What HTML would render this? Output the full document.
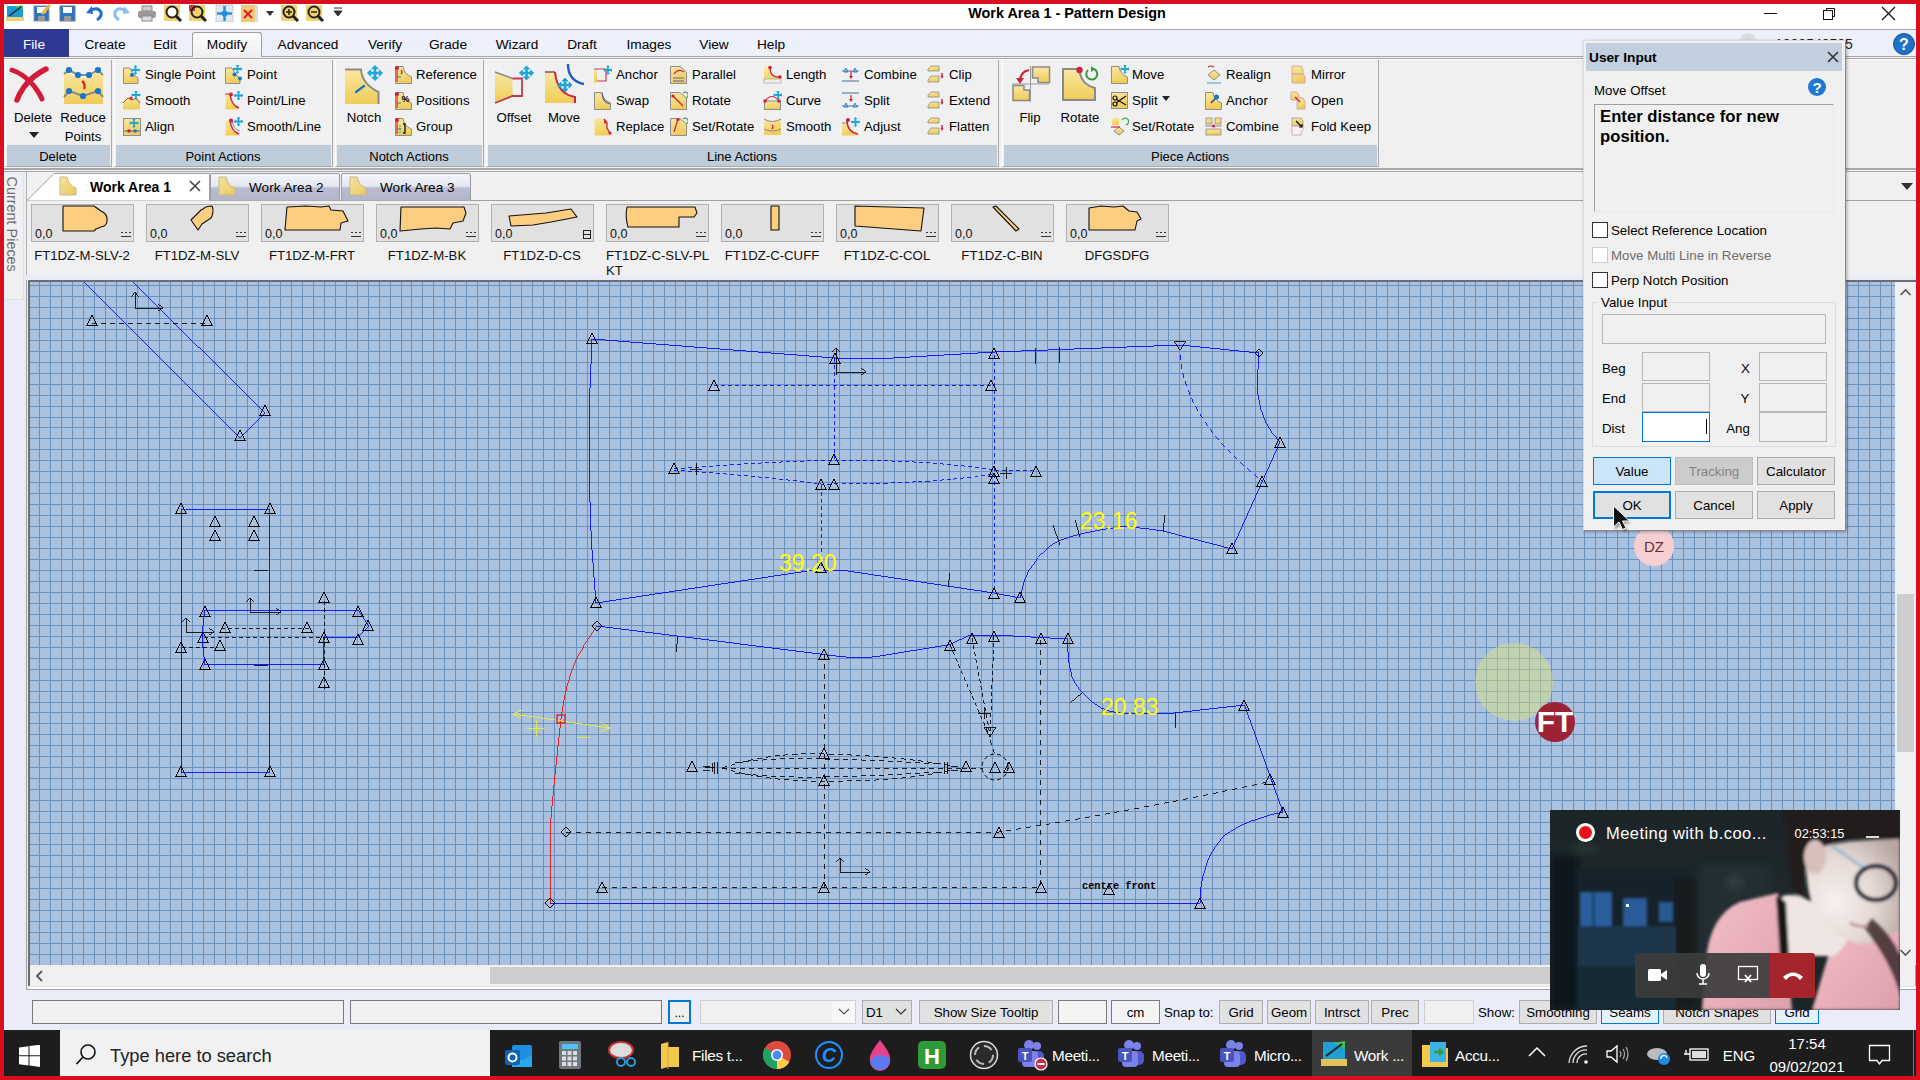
<!DOCTYPE html><html><head><meta charset='utf-8'><style>
*{box-sizing:border-box;margin:0;padding:0}
body{width:1920px;height:1080px;overflow:hidden;background:#d80f1f;font-family:"Liberation Sans",sans-serif;position:relative;color:#000}
.a{position:absolute}
.t{position:absolute;white-space:nowrap;line-height:1}
</style></head><body><div class='a' style='left:4px;top:4px;width:1912px;height:1026px;background:#eaedf9'></div><div class='a' style='left:4px;top:4px;width:1912px;height:25px;background:#fff'></div><svg class='a' style='left:5px;top:4px;' width='20' height='18' viewBox='0 0 20 18'><rect x='2' y='2' width='16' height='11' fill='#1a9bd7'/><path d='M9 3 L17 1 L18 6 Z' fill='#3fbf55'/><path d='M4 12 L16 3' stroke='#222' stroke-width='1.5'/><rect x='1' y='13' width='18' height='4' fill='#f0d27a'/></svg><svg class='a' style='left:32px;top:4px;' width='20' height='18' viewBox='0 0 20 18'><rect x='2' y='2' width='15' height='15' fill='#2676c4' stroke='#8a97a8'/><rect x='5' y='3' width='9' height='6' fill='#fff'/><rect x='6' y='12' width='7' height='5' fill='#999'/><path d='M10 10 L18 1' stroke='#f0b640' stroke-width='3'/></svg><svg class='a' style='left:58px;top:4px;' width='20' height='18' viewBox='0 0 20 18'><rect x='2' y='2' width='15' height='15' fill='#2676c4' stroke='#6f7d90'/><rect x='5' y='3' width='9' height='6' fill='#fff'/><rect x='6' y='12' width='7' height='5' fill='#999'/></svg><svg class='a' style='left:85px;top:4px;' width='20' height='18' viewBox='0 0 20 18'><path d='M5 7 Q12 2 16 8 Q17 13 12 16' stroke='#1d6fd0' stroke-width='3' fill='none'/><path d='M1 9 L7 2 L8 10 Z' fill='#1d6fd0'/></svg><svg class='a' style='left:111px;top:4px;' width='20' height='18' viewBox='0 0 20 18'><path d='M15 7 Q8 2 4 8 Q3 13 8 16' stroke='#88bbee' stroke-width='3' fill='none'/><path d='M19 9 L13 2 L12 10 Z' fill='#88bbee'/></svg><svg class='a' style='left:137px;top:4px;' width='20' height='18' viewBox='0 0 20 18'><rect x='5' y='2' width='10' height='5' fill='#ccc' stroke='#888'/><rect x='1' y='7' width='18' height='7' rx='2' fill='#9a9a9a'/><rect x='5' y='12' width='10' height='5' fill='#ddd' stroke='#888'/></svg><svg class='a' style='left:163px;top:4px;' width='20' height='18' viewBox='0 0 20 18'><rect x='1' y='1' width='16' height='16' fill='#f3d36b'/><circle cx='9' cy='8' r='5.5' fill='#fff' stroke='#222' stroke-width='2'/><path d='M13 12 L18 17' stroke='#222' stroke-width='3'/></svg><svg class='a' style='left:188px;top:4px;' width='20' height='18' viewBox='0 0 20 18'><rect x='1' y='1' width='16' height='16' fill='#f3d36b'/><rect x='1' y='1' width='6' height='6' fill='#d33'/><circle cx='9' cy='8' r='5.5' fill='none' stroke='#222' stroke-width='2'/><path d='M13 12 L18 17' stroke='#222' stroke-width='3'/></svg><svg class='a' style='left:215px;top:4px;' width='20' height='18' viewBox='0 0 20 18'><rect x='1' y='1' width='17' height='17' fill='#dfe8f3' stroke='#bbb' stroke-dasharray='2 1'/><path d='M9.5 2 V17 M2 9.5 H17' stroke='#2a8fd8' stroke-width='2.5'/><circle cx='9.5' cy='9.5' r='3' fill='#2a8fd8'/></svg><svg class='a' style='left:239px;top:4px;' width='20' height='18' viewBox='0 0 20 18'><rect x='2' y='1' width='14' height='17' fill='#f0c878'/><path d='M5 6 L13 14 M13 6 L5 14' stroke='#d22' stroke-width='2'/><rect x='16' y='1' width='3' height='17' fill='#ddd'/></svg><svg class='a' style='left:280px;top:4px;' width='20' height='18' viewBox='0 0 20 18'><rect x='1' y='1' width='16' height='16' fill='#f3d36b'/><circle cx='9' cy='8' r='5.5' fill='none' stroke='#222' stroke-width='2'/><path d='M6 8 H12 M9 5 V11' stroke='#222' stroke-width='1.5'/><path d='M13 12 L18 17' stroke='#222' stroke-width='3'/></svg><svg class='a' style='left:305px;top:4px;' width='20' height='18' viewBox='0 0 20 18'><rect x='1' y='1' width='16' height='16' fill='#f3d36b'/><circle cx='9' cy='8' r='5.5' fill='none' stroke='#222' stroke-width='2'/><path d='M6 8 H12' stroke='#222' stroke-width='1.5'/><path d='M13 12 L18 17' stroke='#222' stroke-width='3'/></svg><svg class='a' style='left:265px;top:9px;' width='10' height='8' viewBox='0 0 10 8'><path d='M1 2 H9 L5 7 Z' fill='#333'/></svg><svg class='a' style='left:333px;top:7px;' width='10' height='12' viewBox='0 0 10 12'><path d='M1 1 H9 M1 4 H9 L5 9 Z' stroke='#333' fill='#333'/></svg><div class='t' style='left:937.0px;top:5.8px;width:260px;text-align:center;font-size:14.4px;font-weight:700;color:#000;'>Work Area 1 - Pattern Design</div><div class='a' style='left:1764px;top:13px;width:13px;height:1px;background:#111'></div><svg class='a' style='left:1822px;top:7px;' width='14' height='14' viewBox='0 0 14 14'><rect x='1.5' y='3.5' width='9' height='9' fill='none' stroke='#111'/><path d='M4.5 3.5 V1.5 H12.5 V9.5 H10.5' fill='none' stroke='#111'/></svg><svg class='a' style='left:1881px;top:6px;' width='15' height='15' viewBox='0 0 15 15'><path d='M1 1 L14 14 M14 1 L1 14' stroke='#111' stroke-width='1.2'/></svg><div class='a' style='left:4px;top:29px;width:1912px;height:28px;background:#edf0fb;border-top:1px solid #a6a6a6;border-bottom:1px solid #a6a6a6'></div><div class='a' style='left:4px;top:29px;width:65px;height:29px;background:#2e3a92'></div><div class='a' style='left:192px;top:32px;width:70px;height:26px;background:linear-gradient(#fdfdfe,#efefef);border:1px solid #a0a0a0;border-bottom:none;border-radius:3px 3px 0 0'></div><div class='t' style='left:4.0px;top:38.4px;width:60px;text-align:center;font-size:13.7px;font-weight:400;color:#fff;'>File</div><div class='t' style='left:65.0px;top:38.4px;width:80px;text-align:center;font-size:13.7px;font-weight:400;color:#000;'>Create</div><div class='t' style='left:125.0px;top:38.4px;width:80px;text-align:center;font-size:13.7px;font-weight:400;color:#000;'>Edit</div><div class='t' style='left:187.0px;top:38.4px;width:80px;text-align:center;font-size:13.7px;font-weight:400;color:#000;'>Modify</div><div class='t' style='left:268.0px;top:38.4px;width:80px;text-align:center;font-size:13.7px;font-weight:400;color:#000;'>Advanced</div><div class='t' style='left:345.0px;top:38.4px;width:80px;text-align:center;font-size:13.7px;font-weight:400;color:#000;'>Verify</div><div class='t' style='left:408.0px;top:38.4px;width:80px;text-align:center;font-size:13.7px;font-weight:400;color:#000;'>Grade</div><div class='t' style='left:477.0px;top:38.4px;width:80px;text-align:center;font-size:13.7px;font-weight:400;color:#000;'>Wizard</div><div class='t' style='left:542.0px;top:38.4px;width:80px;text-align:center;font-size:13.7px;font-weight:400;color:#000;'>Draft</div><div class='t' style='left:609.0px;top:38.4px;width:80px;text-align:center;font-size:13.7px;font-weight:400;color:#000;'>Images</div><div class='t' style='left:674.0px;top:38.4px;width:80px;text-align:center;font-size:13.7px;font-weight:400;color:#000;'>View</div><div class='t' style='left:731.0px;top:38.4px;width:80px;text-align:center;font-size:13.7px;font-weight:400;color:#000;'>Help</div><div class='t' style='left:1775.0px;top:36.6px;font-size:14px;font-weight:400;color:#222;'>1000540505</div><div class='a' style='left:1740px;top:33px;width:16px;height:16px;border-radius:50%;background:#dcdde3'></div><svg class='a' style='left:1892px;top:32px;' width='24' height='24' viewBox='0 0 24 24'><circle cx='12' cy='12' r='10.5' fill='#1e73c8'/><circle cx='12' cy='12' r='10.5' fill='none' stroke='#0d4f99'/><text x='12' y='17.5' font-size='16' font-weight='700' text-anchor='middle' fill='#fff' font-family='Liberation Sans'>?</text></svg><div class='a' style='left:4px;top:57px;width:1912px;height:111px;background:#f0f0f0'></div><div class='a' style='left:4px;top:58px;width:1912px;height:1px;background:#a6a6a6'></div><div class='a' style='left:4px;top:59px;width:1912px;height:1px;background:#fff'></div><div class='a' style='left:5px;top:60px;width:107px;height:107px;border:1px solid #a9a9a9;border-top:none;border-left-color:#fff;background:#f0f0f0'></div><div class='a' style='left:7px;top:145px;width:103px;height:21px;background:#bfccda;border-top:1px solid #bac8d8'></div><div class='t' style='left:-92.0px;top:149.5px;width:300px;text-align:center;font-size:13.0px;font-weight:400;color:#000;'>Delete</div><div class='a' style='left:114px;top:60px;width:219px;height:107px;border:1px solid #a9a9a9;border-top:none;border-left-color:#fff;background:#f0f0f0'></div><div class='a' style='left:116px;top:145px;width:215px;height:21px;background:#bfccda;border-top:1px solid #bac8d8'></div><div class='t' style='left:73.0px;top:149.5px;width:300px;text-align:center;font-size:13.0px;font-weight:400;color:#000;'>Point Actions</div><div class='a' style='left:335px;top:60px;width:149px;height:107px;border:1px solid #a9a9a9;border-top:none;border-left-color:#fff;background:#f0f0f0'></div><div class='a' style='left:337px;top:145px;width:145px;height:21px;background:#bfccda;border-top:1px solid #bac8d8'></div><div class='t' style='left:259.0px;top:149.5px;width:300px;text-align:center;font-size:13.0px;font-weight:400;color:#000;'>Notch Actions</div><div class='a' style='left:486px;top:60px;width:513px;height:107px;border:1px solid #a9a9a9;border-top:none;border-left-color:#fff;background:#f0f0f0'></div><div class='a' style='left:488px;top:145px;width:509px;height:21px;background:#bfccda;border-top:1px solid #bac8d8'></div><div class='t' style='left:592.0px;top:149.5px;width:300px;text-align:center;font-size:13.0px;font-weight:400;color:#000;'>Line Actions</div><div class='a' style='left:1002px;top:60px;width:377px;height:107px;border:1px solid #a9a9a9;border-top:none;border-left-color:#fff;background:#f0f0f0'></div><div class='a' style='left:1004px;top:145px;width:373px;height:21px;background:#bfccda;border-top:1px solid #bac8d8'></div><div class='t' style='left:1040.0px;top:149.5px;width:300px;text-align:center;font-size:13.0px;font-weight:400;color:#000;'>Piece Actions</div><div class='a' style='left:4px;top:168px;width:1912px;height:2px;background:#a8a8a8'></div><div class='a' style='left:4px;top:170px;width:1912px;height:1px;background:#eef0fa'></div><div class='a' style='left:4px;top:171px;width:1912px;height:1px;background:#a8a8a8'></div><svg class='a' style='left:14px;top:64px;overflow:visible' width='40' height='42' viewBox='0 0 40 42'><defs><linearGradient id='yb' x1='0' y1='0' x2='0' y2='1'><stop offset='0' stop-color='#f9e7a2'/><stop offset='1' stop-color='#f0cc58'/></linearGradient></defs><path d='M-2 6 Q10 10 20 22 Q26 30 28 35' stroke='#d21a3a' stroke-width='5' fill='none' stroke-linecap='round'/><path d='M32 5 Q18 12 10 23 Q5 30 3 36' stroke='#d21a3a' stroke-width='5.5' fill='none' stroke-linecap='round'/></svg><div class='t' style='left:-7.0px;top:110.8px;width:80px;text-align:center;font-size:13.2px;font-weight:400;color:#000;'>Delete</div><svg class='a' style='left:28px;top:131px;' width='12' height='8' viewBox='0 0 12 8'><path d='M1 1 H11 L6 7 Z' fill='#222'/></svg><svg class='a' style='left:64px;top:64px;overflow:visible' width='40' height='42' viewBox='0 0 40 42'><defs><linearGradient id='yb' x1='0' y1='0' x2='0' y2='1'><stop offset='0' stop-color='#f9e7a2'/><stop offset='1' stop-color='#f0cc58'/></linearGradient></defs><path d='M0 7 L5 10 L14 14 L25 14 L34 7 L39 10 V40 H0 Z' fill='url(#yb)'/><path d='M0 10 L5 6 L14 11 L25 11 L34 6 L39 11 M0 33 L5 27 L19 32 L34 27 L39 33' stroke='#8a8a8a' stroke-width='2' fill='none'/><circle cx='5' cy='6' r='3.1' fill='#1a78c2'/><circle cx='14' cy='11' r='3.1' fill='#1a78c2'/><circle cx='25' cy='11' r='3.1' fill='#1a78c2'/><circle cx='34' cy='6' r='3.1' fill='#1a78c2'/><circle cx='5' cy='27' r='3.1' fill='#1a78c2'/><circle cx='19' cy='32' r='3.1' fill='#1a78c2'/><circle cx='34' cy='27' r='3.1' fill='#1a78c2'/><path d='M18 17 Q22 20 20 25' stroke='#d22' stroke-width='2.2' fill='none'/></svg><div class='t' style='left:43.0px;top:110.8px;width:80px;text-align:center;font-size:13.2px;font-weight:400;color:#000;'>Reduce</div><div class='t' style='left:43.0px;top:129.8px;width:80px;text-align:center;font-size:13.2px;font-weight:400;color:#000;'>Points</div><svg class='a' style='left:122px;top:65px;' width='19' height='19' viewBox='0 0 19 19'><defs><linearGradient id='yg' x1='0' y1='0' x2='0.3' y2='1'><stop offset='0' stop-color='#fae7a4'/><stop offset='1' stop-color='#f0cd5a'/></linearGradient></defs><path d='M1.5 3 H8 L12 10 L16 13 V18.5 H1.5 Z' fill='url(#yg)' stroke='#8d8d8d'/><circle cx='10' cy='10' r='2' fill='#1a78c2'/><path d='M13.5 1 V9 M9.5 5 H17.5' stroke='#1ca6dc' stroke-width='1.8'/><path d='M11.7 2 L13.5 0 L15.3 2 Z M11.7 8 L13.5 10 L15.3 8 Z M10.5 3.2 L8.5 5 L10.5 6.8 Z M16.5 3.2 L18.5 5 L16.5 6.8 Z' fill='#1ca6dc'/></svg><div class='t' style='left:145.0px;top:67.8px;font-size:13.2px;font-weight:400;color:#000;'>Single Point</div><svg class='a' style='left:122px;top:91px;' width='19' height='19' viewBox='0 0 19 19'><defs><linearGradient id='yg' x1='0' y1='0' x2='0.3' y2='1'><stop offset='0' stop-color='#fae7a4'/><stop offset='1' stop-color='#f0cd5a'/></linearGradient></defs><path d='M1 10 L6 6 L10 8 L14 6 L18 11 V18.5 H1 Z' fill='url(#yg)'/><path d='M1 12 L6 7 L10 9 L14 7 L18 12' stroke='#c43' stroke-width='1' fill='none'/><circle cx='9' cy='7' r='1.5' fill='#d0213a'/><path d='M14 0 V8 M10 4 H18' stroke='#1ca6dc' stroke-width='1.8'/><path d='M12.2 1 L14 -1 L15.8 1 Z M12.2 7 L14 9 L15.8 7 Z M11 2.2 L9 4 L11 5.8 Z M17 2.2 L19 4 L17 5.8 Z' fill='#1ca6dc'/></svg><div class='t' style='left:145.0px;top:93.8px;font-size:13.2px;font-weight:400;color:#000;'>Smooth</div><svg class='a' style='left:122px;top:117px;' width='19' height='19' viewBox='0 0 19 19'><defs><linearGradient id='yg' x1='0' y1='0' x2='0.3' y2='1'><stop offset='0' stop-color='#fae7a4'/><stop offset='1' stop-color='#f0cd5a'/></linearGradient></defs><rect x='1.5' y='1.5' width='17' height='17' fill='url(#yg)' stroke='#8d8d8d'/><path d='M2 14 H18' stroke='#1a78c2'/><circle cx='7' cy='14' r='1.8' fill='#d0213a'/><circle cx='13' cy='14' r='1.8' fill='#1a78c2'/><path d='M12 2 V10 M8 6 H16' stroke='#1ca6dc' stroke-width='1.8'/><path d='M10.2 3 L12 1 L13.8 3 Z M10.2 9 L12 11 L13.8 9 Z M9 4.2 L7 6 L9 7.8 Z M15 4.2 L17 6 L15 7.8 Z' fill='#1ca6dc'/></svg><div class='t' style='left:145.0px;top:119.8px;font-size:13.2px;font-weight:400;color:#000;'>Align</div><svg class='a' style='left:224px;top:65px;' width='19' height='19' viewBox='0 0 19 19'><defs><linearGradient id='yg' x1='0' y1='0' x2='0.3' y2='1'><stop offset='0' stop-color='#fae7a4'/><stop offset='1' stop-color='#f0cd5a'/></linearGradient></defs><path d='M1.5 3 H8 L12 10 L16 13 V18.5 H1.5 Z' fill='url(#yg)' stroke='#8d8d8d'/><circle cx='10.5' cy='9.5' r='2' fill='#1a78c2'/><circle cx='16' cy='13.5' r='2' fill='#1a78c2'/><path d='M13.5 0 V8 M9.5 4 H17.5' stroke='#1ca6dc' stroke-width='1.8'/><path d='M11.7 1 L13.5 -1 L15.3 1 Z M11.7 7 L13.5 9 L15.3 7 Z M10.5 2.2 L8.5 4 L10.5 5.8 Z M16.5 2.2 L18.5 4 L16.5 5.8 Z' fill='#1ca6dc'/></svg><div class='t' style='left:247.0px;top:67.8px;font-size:13.2px;font-weight:400;color:#000;'>Point</div><svg class='a' style='left:224px;top:91px;' width='19' height='19' viewBox='0 0 19 19'><defs><linearGradient id='yg' x1='0' y1='0' x2='0.3' y2='1'><stop offset='0' stop-color='#fae7a4'/><stop offset='1' stop-color='#f0cd5a'/></linearGradient></defs><path d='M1.5 3 H6 Q7 14 14 17 V18.5 H1.5 Z' fill='url(#yg)'/><path d='M6 3 Q7 14 15 17' stroke='#d0213a' stroke-width='1.5' fill='none'/><circle cx='7' cy='3.5' r='2' fill='#d0213a'/><path d='M1 3 H6' stroke='#c33'/><path d='M14.5 0.5 V8.5 M10.5 4.5 H18.5' stroke='#1ca6dc' stroke-width='1.8'/><path d='M12.7 1.5 L14.5 -0.5 L16.3 1.5 Z M12.7 7.5 L14.5 9.5 L16.3 7.5 Z M11.5 2.7 L9.5 4.5 L11.5 6.3 Z M17.5 2.7 L19.5 4.5 L17.5 6.3 Z' fill='#1ca6dc'/></svg><div class='t' style='left:247.0px;top:93.8px;font-size:13.2px;font-weight:400;color:#000;'>Point/Line</div><svg class='a' style='left:224px;top:117px;' width='19' height='19' viewBox='0 0 19 19'><defs><linearGradient id='yg' x1='0' y1='0' x2='0.3' y2='1'><stop offset='0' stop-color='#fae7a4'/><stop offset='1' stop-color='#f0cd5a'/></linearGradient></defs><path d='M1.5 3 H6 Q7 14 14 17 V18.5 H1.5 Z' fill='url(#yg)'/><path d='M6 3 Q7 14 15 17' stroke='#d0213a' stroke-width='1.5' fill='none'/><path d='M8 3 Q9 12 16 14' stroke='#888' fill='none'/><circle cx='7' cy='3.5' r='2' fill='#d0213a'/><path d='M14.5 0.5 V8.5 M10.5 4.5 H18.5' stroke='#1ca6dc' stroke-width='1.8'/><path d='M12.7 1.5 L14.5 -0.5 L16.3 1.5 Z M12.7 7.5 L14.5 9.5 L16.3 7.5 Z M11.5 2.7 L9.5 4.5 L11.5 6.3 Z M17.5 2.7 L19.5 4.5 L17.5 6.3 Z' fill='#1ca6dc'/></svg><div class='t' style='left:247.0px;top:119.8px;font-size:13.2px;font-weight:400;color:#000;'>Smooth/Line</div><svg class='a' style='left:345px;top:64px;overflow:visible' width='40' height='42' viewBox='0 0 40 42'><defs><linearGradient id='yb' x1='0' y1='0' x2='0' y2='1'><stop offset='0' stop-color='#f9e7a2'/><stop offset='1' stop-color='#f0cc58'/></linearGradient></defs><path d='M0 5 H16 Q17 20 34 28 V40 H0 Z' fill='url(#yb)'/><path d='M0 5.5 H16 Q17 20 33.5 28 V40' stroke='#8a8a8a' stroke-width='2' fill='none'/><path d='M11 28 L19 22' stroke='#1a78c2' stroke-width='2.4' stroke-linecap='round'/><path d='M30 3.5 V14.5 M24.5 9 H35.5' stroke='#1ca6dc' stroke-width='2.6'/><path d='M26.85 4.65 L30 1.5 L33.15 4.65 Z M26.85 13.35 L30 16.5 L33.15 13.35 Z M25.65 5.85 L22.5 9 L25.65 12.15 Z M34.35 5.85 L37.5 9 L34.35 12.15 Z' fill='#1ca6dc' stroke='#1ca6dc' stroke-width='1'/></svg><div class='t' style='left:324.0px;top:110.8px;width:80px;text-align:center;font-size:13.2px;font-weight:400;color:#000;'>Notch</div><svg class='a' style='left:394px;top:65px;' width='19' height='19' viewBox='0 0 19 19'><defs><linearGradient id='yg' x1='0' y1='0' x2='0.3' y2='1'><stop offset='0' stop-color='#fae7a4'/><stop offset='1' stop-color='#f0cd5a'/></linearGradient></defs><path d='M1.5 1.5 H9 Q10 9 17.5 12 V18.5 H1.5 Z' fill='url(#yg)' stroke='#8d8d8d'/><path d='M3 3 V17' stroke='#d0213a' stroke-width='1.2'/><circle cx='3' cy='3' r='2' fill='#d0213a'/><path d='M3 12 H7' stroke='#2a9ab0' stroke-width='1.2'/><path d='M7 5 Q9 7 7 9' stroke='#d22' stroke-width='1.2' fill='none'/></svg><div class='t' style='left:416.0px;top:67.8px;font-size:13.2px;font-weight:400;color:#000;'>Reference</div><svg class='a' style='left:394px;top:91px;' width='19' height='19' viewBox='0 0 19 19'><defs><linearGradient id='yg' x1='0' y1='0' x2='0.3' y2='1'><stop offset='0' stop-color='#fae7a4'/><stop offset='1' stop-color='#f0cd5a'/></linearGradient></defs><path d='M1.5 1.5 H9 Q10 9 17.5 12 V18.5 H1.5 Z' fill='url(#yg)' stroke='#8d8d8d'/><path d='M3 3 V17' stroke='#d0213a' stroke-width='1.2'/><circle cx='3' cy='3' r='2' fill='#d0213a'/><path d='M3 12 H7' stroke='#2a9ab0' stroke-width='1.2'/><text x='11.5' y='11' font-size='9' font-weight='700' text-anchor='middle' font-family='Liberation Sans'>%</text></svg><div class='t' style='left:416.0px;top:93.8px;font-size:13.2px;font-weight:400;color:#000;'>Positions</div><svg class='a' style='left:394px;top:117px;' width='19' height='19' viewBox='0 0 19 19'><defs><linearGradient id='yg' x1='0' y1='0' x2='0.3' y2='1'><stop offset='0' stop-color='#fae7a4'/><stop offset='1' stop-color='#f0cd5a'/></linearGradient></defs><path d='M1.5 1.5 H9 Q10 9 17.5 12 V18.5 H1.5 Z' fill='url(#yg)' stroke='#8d8d8d'/><path d='M3 3 V17' stroke='#d0213a' stroke-width='1.2'/><circle cx='3' cy='3' r='2' fill='#d0213a'/><path d='M3 12 H7' stroke='#2a9ab0' stroke-width='1.2'/><path d='M5 9 H7 M5 12 H7 M5 15 H7' stroke='#2a9ab0'/><path d='M9 7 H11 V16 H9' stroke='#111' stroke-width='1.3' fill='none'/></svg><div class='t' style='left:416.0px;top:119.8px;font-size:13.2px;font-weight:400;color:#000;'>Group</div><svg class='a' style='left:495px;top:64px;overflow:visible' width='40' height='42' viewBox='0 0 40 42'><defs><linearGradient id='yb' x1='0' y1='0' x2='0' y2='1'><stop offset='0' stop-color='#f9e7a2'/><stop offset='1' stop-color='#f0cc58'/></linearGradient></defs><path d='M0 8 L17.5 14.5 V32 L0 39 Z' fill='url(#yb)'/><path d='M0 8 L17.5 14.5' stroke='#888' stroke-width='1.5'/><path d='M17.5 14.5 H27 V32 H17.5 L0 39' stroke='#c9384e' stroke-width='1.8' fill='none'/><path d='M31.5 4 V14 M26.5 9 H36.5' stroke='#1ca6dc' stroke-width='2.6'/><path d='M28.56 4.9399999999999995 L31.5 2 L34.44 4.9399999999999995 Z M28.56 13.06 L31.5 16 L34.44 13.06 Z M27.44 6.0600000000000005 L24.5 9 L27.44 11.94 Z M35.56 6.0600000000000005 L38.5 9 L35.56 11.94 Z' fill='#1ca6dc' stroke='#1ca6dc' stroke-width='1'/></svg><div class='t' style='left:474.0px;top:110.8px;width:80px;text-align:center;font-size:13.2px;font-weight:400;color:#000;'>Offset</div><svg class='a' style='left:545px;top:64px;overflow:visible' width='40' height='42' viewBox='0 0 40 42'><defs><linearGradient id='yb' x1='0' y1='0' x2='0' y2='1'><stop offset='0' stop-color='#f9e7a2'/><stop offset='1' stop-color='#f0cc58'/></linearGradient></defs><path d='M0 8 H10 Q12 30 30 33 V39 H0 Z' fill='url(#yb)'/><path d='M0 8 H10' stroke='#9a7a7a' stroke-width='2'/><path d='M10 8 Q12 30 30 33 V39' stroke='#d0213a' stroke-width='2' fill='none'/><path d='M23 0 Q23 17 39 20' stroke='#1f5fc0' stroke-width='2.4' fill='none'/><path d='M20 16 V26 M15 21 H25' stroke='#1ca6dc' stroke-width='2.6'/><path d='M17.06 16.94 L20 14 L22.94 16.94 Z M17.06 25.06 L20 28 L22.94 25.06 Z M15.94 18.06 L13 21 L15.94 23.94 Z M24.06 18.06 L27 21 L24.06 23.94 Z' fill='#1ca6dc' stroke='#1ca6dc' stroke-width='1'/></svg><div class='t' style='left:524.0px;top:110.8px;width:80px;text-align:center;font-size:13.2px;font-weight:400;color:#000;'>Move</div><svg class='a' style='left:593px;top:65px;' width='19' height='19' viewBox='0 0 19 19'><defs><linearGradient id='yg' x1='0' y1='0' x2='0.3' y2='1'><stop offset='0' stop-color='#fae7a4'/><stop offset='1' stop-color='#f0cd5a'/></linearGradient></defs><path d='M1 6 L4 4 V17 L1 18 Z' fill='url(#yg)'/><path d='M4 4 H13 V16 H4' stroke='#c9384e' stroke-width='1.2' fill='none'/><path d='M1 4 L4 4' stroke='#c9384e'/><path d='M15 1 V9 M11 5 H19' stroke='#1ca6dc' stroke-width='1.8'/><path d='M13.2 2 L15 0 L16.8 2 Z M13.2 8 L15 10 L16.8 8 Z M12 3.2 L10 5 L12 6.8 Z M18 3.2 L20 5 L18 6.8 Z' fill='#1ca6dc'/></svg><div class='t' style='left:616.0px;top:67.8px;font-size:13.2px;font-weight:400;color:#000;'>Anchor</div><svg class='a' style='left:593px;top:91px;' width='19' height='19' viewBox='0 0 19 19'><defs><linearGradient id='yg' x1='0' y1='0' x2='0.3' y2='1'><stop offset='0' stop-color='#fae7a4'/><stop offset='1' stop-color='#f0cd5a'/></linearGradient></defs><path d='M1.5 1.5 H9 Q10 9 17.5 12 V18.5 H1.5 Z' fill='url(#yg)' stroke='#8d8d8d'/><path d='M9 2 Q10 12 17 13' stroke='#4a5cb0' stroke-width='1.2' fill='none'/></svg><div class='t' style='left:616.0px;top:93.8px;font-size:13.2px;font-weight:400;color:#000;'>Swap</div><svg class='a' style='left:593px;top:117px;' width='19' height='19' viewBox='0 0 19 19'><defs><linearGradient id='yg' x1='0' y1='0' x2='0.3' y2='1'><stop offset='0' stop-color='#fae7a4'/><stop offset='1' stop-color='#f0cd5a'/></linearGradient></defs><path d='M1.5 1.5 H11 L14 6 V12 L17 15 V18.5 H1.5 Z' fill='url(#yg)'/><path d='M11 2 L14 6 V11 L17 16' stroke='#d0213a' stroke-width='1.3' fill='none'/><circle cx='12.5' cy='5' r='1.6' fill='#d0213a'/><circle cx='17' cy='16' r='1.6' fill='#d0213a'/></svg><div class='t' style='left:616.0px;top:119.8px;font-size:13.2px;font-weight:400;color:#000;'>Replace</div><svg class='a' style='left:669px;top:65px;' width='19' height='19' viewBox='0 0 19 19'><defs><linearGradient id='yg' x1='0' y1='0' x2='0.3' y2='1'><stop offset='0' stop-color='#fae7a4'/><stop offset='1' stop-color='#f0cd5a'/></linearGradient></defs><path d='M1.5 1.5 H11 L17.5 7 V18.5 H1.5 Z' fill='url(#yg)' stroke='#8d8d8d'/><path d='M5 9 Q9 3 15 7' stroke='#d0213a' stroke-width='1.2' fill='none'/><path d='M4 13 H15 M4 16 H15' stroke='#5563a8' stroke-width='1.2'/></svg><div class='t' style='left:692.0px;top:67.8px;font-size:13.2px;font-weight:400;color:#000;'>Parallel</div><svg class='a' style='left:669px;top:91px;' width='19' height='19' viewBox='0 0 19 19'><defs><linearGradient id='yg' x1='0' y1='0' x2='0.3' y2='1'><stop offset='0' stop-color='#fae7a4'/><stop offset='1' stop-color='#f0cd5a'/></linearGradient></defs><path d='M1.5 1.5 H11 L17.5 7 V18.5 H1.5 Z' fill='url(#yg)' stroke='#8d8d8d'/><path d='M4 5 L14 15' stroke='#d0213a' stroke-width='1.2'/><circle cx='4' cy='5' r='1.6' fill='#d0213a'/><path d='M14 2 A3 3 0 1 1 17 7' stroke='#4a4' stroke-width='1.2' fill='none'/></svg><div class='t' style='left:692.0px;top:93.8px;font-size:13.2px;font-weight:400;color:#000;'>Rotate</div><svg class='a' style='left:669px;top:117px;' width='19' height='19' viewBox='0 0 19 19'><defs><linearGradient id='yg' x1='0' y1='0' x2='0.3' y2='1'><stop offset='0' stop-color='#fae7a4'/><stop offset='1' stop-color='#f0cd5a'/></linearGradient></defs><path d='M1.5 1.5 H11 L17.5 7 V18.5 H1.5 Z' fill='url(#yg)' stroke='#8d8d8d'/><path d='M9 2 L5 15' stroke='#d0213a' stroke-width='1.2'/><circle cx='9' cy='2.5' r='1.6' fill='#d0213a'/><path d='M14 2 A3 3 0 1 1 17 7' stroke='#4a4' stroke-width='1.2' fill='none'/></svg><div class='t' style='left:692.0px;top:119.8px;font-size:13.2px;font-weight:400;color:#000;'>Set/Rotate</div><svg class='a' style='left:763px;top:65px;' width='19' height='19' viewBox='0 0 19 19'><defs><linearGradient id='yg' x1='0' y1='0' x2='0.3' y2='1'><stop offset='0' stop-color='#fae7a4'/><stop offset='1' stop-color='#f0cd5a'/></linearGradient></defs><path d='M1 2 H6 Q8 12 17 12 V18 H1 Z' fill='url(#yg)'/><path d='M7 2 Q7 13 17 12' stroke='#d0213a' stroke-width='1.3' fill='none'/><circle cx='7' cy='2.5' r='1.8' fill='#d0213a'/><circle cx='17' cy='12' r='1.8' fill='#d0213a'/><rect x='1' y='14' width='17' height='4' fill='#eee' stroke='#999' stroke-width='0.6'/></svg><div class='t' style='left:786.0px;top:67.8px;font-size:13.2px;font-weight:400;color:#000;'>Length</div><svg class='a' style='left:763px;top:91px;' width='19' height='19' viewBox='0 0 19 19'><defs><linearGradient id='yg' x1='0' y1='0' x2='0.3' y2='1'><stop offset='0' stop-color='#fae7a4'/><stop offset='1' stop-color='#f0cd5a'/></linearGradient></defs><rect x='1.5' y='10' width='16' height='8.5' fill='url(#yg)' stroke='#8d8d8d'/><path d='M2 10 Q9 1 16 10' stroke='#d0213a' stroke-width='1.2' fill='none'/><circle cx='2' cy='10' r='1.8' fill='#d0213a'/><circle cx='16' cy='10' r='1.8' fill='#d0213a'/><path d='M15 0 V8 M11 4 H19' stroke='#1ca6dc' stroke-width='1.8'/><path d='M13.2 1 L15 -1 L16.8 1 Z M13.2 7 L15 9 L16.8 7 Z M12 2.2 L10 4 L12 5.8 Z M18 2.2 L20 4 L18 5.8 Z' fill='#1ca6dc'/></svg><div class='t' style='left:786.0px;top:93.8px;font-size:13.2px;font-weight:400;color:#000;'>Curve</div><svg class='a' style='left:763px;top:117px;' width='19' height='19' viewBox='0 0 19 19'><defs><linearGradient id='yg' x1='0' y1='0' x2='0.3' y2='1'><stop offset='0' stop-color='#fae7a4'/><stop offset='1' stop-color='#f0cd5a'/></linearGradient></defs><path d='M1 2 Q9 7 18 2 V18 H1 Z' fill='url(#yg)'/><path d='M1 2 Q9 7 18 2 M1 12 Q9 16 18 12' stroke='#888' fill='none'/><path d='M9 8 Q11 10 9 12' stroke='#d22' stroke-width='1.2' fill='none'/></svg><div class='t' style='left:786.0px;top:119.8px;font-size:13.2px;font-weight:400;color:#000;'>Smooth</div><svg class='a' style='left:841px;top:65px;' width='19' height='19' viewBox='0 0 19 19'><defs><linearGradient id='yg' x1='0' y1='0' x2='0.3' y2='1'><stop offset='0' stop-color='#fae7a4'/><stop offset='1' stop-color='#f0cd5a'/></linearGradient></defs><path d='M1 6 H18' stroke='#3a7abf'/><path d='M5 3 L3 7 H7 Z M14 3 L12 7 H16 Z' fill='none' stroke='#3a7abf'/><path d='M10 6 V12' stroke='#d0213a' stroke-width='1.3'/><path d='M8 11 L10 14 L12 11 Z' fill='#d0213a'/><path d='M1 16 H18' stroke='#6a8aaa' stroke-width='1.3'/></svg><div class='t' style='left:864.0px;top:67.8px;font-size:13.2px;font-weight:400;color:#000;'>Combine</div><svg class='a' style='left:841px;top:91px;' width='19' height='19' viewBox='0 0 19 19'><defs><linearGradient id='yg' x1='0' y1='0' x2='0.3' y2='1'><stop offset='0' stop-color='#fae7a4'/><stop offset='1' stop-color='#f0cd5a'/></linearGradient></defs><path d='M1 2 H18' stroke='#6a8aaa' stroke-width='1.3'/><path d='M10 4 V9' stroke='#d0213a' stroke-width='1.3'/><path d='M8 8 L10 11 L12 8 Z' fill='#d0213a'/><path d='M1 15 H18' stroke='#3a7abf'/><path d='M5 12 L3 16 H7 Z M14 12 L12 16 H16 Z' fill='none' stroke='#3a7abf'/></svg><div class='t' style='left:864.0px;top:93.8px;font-size:13.2px;font-weight:400;color:#000;'>Split</div><svg class='a' style='left:841px;top:117px;' width='19' height='19' viewBox='0 0 19 19'><defs><linearGradient id='yg' x1='0' y1='0' x2='0.3' y2='1'><stop offset='0' stop-color='#fae7a4'/><stop offset='1' stop-color='#f0cd5a'/></linearGradient></defs><path d='M1 6 H6 Q7 15 17 17 V18.5 H1 Z' fill='url(#yg)'/><path d='M6 3 Q6 15 17 17' stroke='#d0213a' stroke-width='1.5' fill='none'/><circle cx='7' cy='3' r='2' fill='#d0213a'/><path d='M1 6 H6' stroke='#888'/><path d='M14.5 1 V9 M10.5 5 H18.5' stroke='#1ca6dc' stroke-width='1.8'/><path d='M12.7 2 L14.5 0 L16.3 2 Z M12.7 8 L14.5 10 L16.3 8 Z M11.5 3.2 L9.5 5 L11.5 6.8 Z M17.5 3.2 L19.5 5 L17.5 6.8 Z' fill='#1ca6dc'/></svg><div class='t' style='left:864.0px;top:119.8px;font-size:13.2px;font-weight:400;color:#000;'>Adjust</div><svg class='a' style='left:926px;top:65px;' width='19' height='19' viewBox='0 0 19 19'><defs><linearGradient id='yg' x1='0' y1='0' x2='0.3' y2='1'><stop offset='0' stop-color='#fae7a4'/><stop offset='1' stop-color='#f0cd5a'/></linearGradient></defs><path d='M2 4 L5 1 H13 V6 H2 Z' fill='url(#yg)' stroke='#8d8d8d' stroke-width='0.8'/><path d='M2 15 L5 11 H13 V17 H2 Z' fill='url(#yg)' stroke='#8d8d8d' stroke-width='0.8'/><path d='M16 8 V12' stroke='#d0213a' stroke-width='1.5'/><path d='M14.5 11 L16 14 L17.5 11 Z' fill='#d0213a'/></svg><div class='t' style='left:949.0px;top:67.8px;font-size:13.2px;font-weight:400;color:#000;'>Clip</div><svg class='a' style='left:926px;top:91px;' width='19' height='19' viewBox='0 0 19 19'><defs><linearGradient id='yg' x1='0' y1='0' x2='0.3' y2='1'><stop offset='0' stop-color='#fae7a4'/><stop offset='1' stop-color='#f0cd5a'/></linearGradient></defs><path d='M2 4 L5 1 H13 V6 H2 Z' fill='url(#yg)' stroke='#8d8d8d' stroke-width='0.8'/><path d='M2 15 L5 11 H13 V17 H2 Z' fill='url(#yg)' stroke='#8d8d8d' stroke-width='0.8'/><path d='M16 8 V12' stroke='#d0213a' stroke-width='1.5'/><path d='M14.5 11 L16 14 L17.5 11 Z' fill='#d0213a'/></svg><div class='t' style='left:949.0px;top:93.8px;font-size:13.2px;font-weight:400;color:#000;'>Extend</div><svg class='a' style='left:926px;top:117px;' width='19' height='19' viewBox='0 0 19 19'><defs><linearGradient id='yg' x1='0' y1='0' x2='0.3' y2='1'><stop offset='0' stop-color='#fae7a4'/><stop offset='1' stop-color='#f0cd5a'/></linearGradient></defs><path d='M2 4 L5 1 H13 V6 H2 Z' fill='url(#yg)' stroke='#8d8d8d' stroke-width='0.8'/><path d='M2 15 L5 11 H13 V17 H2 Z' fill='url(#yg)' stroke='#8d8d8d' stroke-width='0.8'/><path d='M16 8 V12' stroke='#d0213a' stroke-width='1.5'/><path d='M14.5 11 L16 14 L17.5 11 Z' fill='#d0213a'/></svg><div class='t' style='left:949.0px;top:119.8px;font-size:13.2px;font-weight:400;color:#000;'>Flatten</div><svg class='a' style='left:1011px;top:64px;overflow:visible' width='40' height='42' viewBox='0 0 40 42'><defs><linearGradient id='yb' x1='0' y1='0' x2='0' y2='1'><stop offset='0' stop-color='#f9e7a2'/><stop offset='1' stop-color='#f0cc58'/></linearGradient></defs><path d='M21.5 3 H38.5 V18.5 H27 V14 H21.5 Z' fill='url(#yb)' stroke='#8a8a8a' stroke-width='1.5'/><path d='M2 21.5 H13 V26 H18.5 V36.5 H2 Z' fill='url(#yb)' stroke='#8a8a8a' stroke-width='1.5'/><path d='M19.5 2 V38 M1 20 H38' stroke='#9a9a9a' stroke-width='1'/><path d='M9 17 Q9 8 18 6' stroke='#d0213a' stroke-width='2.2' fill='none'/><path d='M5 14 L9 20 L13 14 Z' fill='#d0213a'/></svg><div class='t' style='left:990.0px;top:110.8px;width:80px;text-align:center;font-size:13.2px;font-weight:400;color:#000;'>Flip</div><svg class='a' style='left:1061px;top:64px;overflow:visible' width='40' height='42' viewBox='0 0 40 42'><defs><linearGradient id='yb' x1='0' y1='0' x2='0' y2='1'><stop offset='0' stop-color='#f9e7a2'/><stop offset='1' stop-color='#f0cc58'/></linearGradient></defs><path d='M2 5 H18.5 Q19 20 34 24 V36 H2 Z' fill='url(#yb)' stroke='#8a8a8a' stroke-width='2'/><circle cx='18.5' cy='6' r='3.2' fill='#d0213a'/><path d='M27 6 A5.5 5.5 0 1 0 33 5' stroke='#3a9a3a' stroke-width='2' fill='none'/><path d='M30 2 L34 5 L30 8 Z' fill='#3a9a3a'/></svg><div class='t' style='left:1040.0px;top:110.8px;width:80px;text-align:center;font-size:13.2px;font-weight:400;color:#000;'>Rotate</div><svg class='a' style='left:1110px;top:65px;' width='19' height='19' viewBox='0 0 19 19'><defs><linearGradient id='yg' x1='0' y1='0' x2='0.3' y2='1'><stop offset='0' stop-color='#fae7a4'/><stop offset='1' stop-color='#f0cd5a'/></linearGradient></defs><path d='M1.5 1.5 H9 Q10 9 17.5 12 V18.5 H1.5 Z' fill='url(#yg)' stroke='#8d8d8d'/><path d='M15 0 V8 M11 4 H19' stroke='#1ca6dc' stroke-width='1.8'/><path d='M13.2 1 L15 -1 L16.8 1 Z M13.2 7 L15 9 L16.8 7 Z M12 2.2 L10 4 L12 5.8 Z M18 2.2 L20 4 L18 5.8 Z' fill='#1ca6dc'/></svg><div class='t' style='left:1132.0px;top:67.8px;font-size:13.2px;font-weight:400;color:#000;'>Move</div><svg class='a' style='left:1110px;top:91px;' width='19' height='19' viewBox='0 0 19 19'><defs><linearGradient id='yg' x1='0' y1='0' x2='0.3' y2='1'><stop offset='0' stop-color='#fae7a4'/><stop offset='1' stop-color='#f0cd5a'/></linearGradient></defs><rect x='1.5' y='1.5' width='16' height='16' fill='url(#yg)' stroke='#8d8d8d'/><circle cx='5' cy='13' r='2' fill='none' stroke='#111' stroke-width='1.2'/><circle cx='5' cy='7' r='2' fill='none' stroke='#111' stroke-width='1.2'/><path d='M6 12 L16 5 M6 8 L16 14' stroke='#111' stroke-width='1.2'/></svg><div class='t' style='left:1132.0px;top:93.8px;font-size:13.2px;font-weight:400;color:#000;'>Split</div><svg class='a' style='left:1110px;top:117px;' width='19' height='19' viewBox='0 0 19 19'><defs><linearGradient id='yg' x1='0' y1='0' x2='0.3' y2='1'><stop offset='0' stop-color='#fae7a4'/><stop offset='1' stop-color='#f0cd5a'/></linearGradient></defs><path d='M2 1 H9 V8 H2 Z' fill='url(#yg)'/><path d='M9 10 L14 14 L9 18 L4 14 Z' fill='url(#yg)' stroke='#8d8d8d'/><path d='M1 10 H10' stroke='#d0213a' stroke-width='1.2'/><path d='M12 3 A3.5 3.5 0 1 1 16 8' stroke='#4a4' stroke-width='1.3' fill='none'/></svg><div class='t' style='left:1132.0px;top:119.8px;font-size:13.2px;font-weight:400;color:#000;'>Set/Rotate</div><svg class='a' style='left:1162px;top:96px;' width='8' height='6' viewBox='0 0 8 6'><path d='M0 0 H8 L4 5 Z' fill='#222'/></svg><svg class='a' style='left:1204px;top:65px;' width='19' height='19' viewBox='0 0 19 19'><defs><linearGradient id='yg' x1='0' y1='0' x2='0.3' y2='1'><stop offset='0' stop-color='#fae7a4'/><stop offset='1' stop-color='#f0cd5a'/></linearGradient></defs><path d='M4 2 Q7 0 10 2' stroke='#d0213a' stroke-width='1.2' fill='none'/><path d='M10 5 L16 10 L10 15 L4 10 Z' fill='url(#yg)' stroke='#8d8d8d'/><path d='M3 18 H17' stroke='#3a9ad0'/></svg><div class='t' style='left:1226.0px;top:67.8px;font-size:13.2px;font-weight:400;color:#000;'>Realign</div><svg class='a' style='left:1204px;top:91px;' width='19' height='19' viewBox='0 0 19 19'><defs><linearGradient id='yg' x1='0' y1='0' x2='0.3' y2='1'><stop offset='0' stop-color='#fae7a4'/><stop offset='1' stop-color='#f0cd5a'/></linearGradient></defs><path d='M1.5 1.5 H9 Q10 9 17.5 12 V18.5 H1.5 Z' fill='url(#yg)' stroke='#8d8d8d'/><path d='M7 12 L12 7' stroke='#333' stroke-width='1.2'/><circle cx='12.5' cy='6' r='2.5' fill='#1a78c2'/></svg><div class='t' style='left:1226.0px;top:93.8px;font-size:13.2px;font-weight:400;color:#000;'>Anchor</div><svg class='a' style='left:1204px;top:117px;' width='19' height='19' viewBox='0 0 19 19'><defs><linearGradient id='yg' x1='0' y1='0' x2='0.3' y2='1'><stop offset='0' stop-color='#fae7a4'/><stop offset='1' stop-color='#f0cd5a'/></linearGradient></defs><rect x='2' y='1' width='6' height='6' fill='url(#yg)' stroke='#8d8d8d' stroke-width='0.8'/><rect x='11' y='1' width='6' height='6' fill='url(#yg)' stroke='#8d8d8d' stroke-width='0.8'/><path d='M1 9 H18' stroke='#888'/><circle cx='9.5' cy='9' r='1.5' fill='#d0213a'/><rect x='2' y='12' width='15' height='6' fill='url(#yg)' stroke='#8d8d8d' stroke-width='0.8'/></svg><div class='t' style='left:1226.0px;top:119.8px;font-size:13.2px;font-weight:400;color:#000;'>Combine</div><svg class='a' style='left:1289px;top:65px;' width='19' height='19' viewBox='0 0 19 19'><defs><linearGradient id='yg' x1='0' y1='0' x2='0.3' y2='1'><stop offset='0' stop-color='#fae7a4'/><stop offset='1' stop-color='#f0cd5a'/></linearGradient></defs><path d='M3 1 H12 L14 4 V9 L16 12 V18 H3 Z' fill='url(#yg)' stroke='#c9a0a0' stroke-width='0.8'/><path d='M3 9 H14' stroke='#aaa'/></svg><div class='t' style='left:1311.0px;top:67.8px;font-size:13.2px;font-weight:400;color:#000;'>Mirror</div><svg class='a' style='left:1289px;top:91px;' width='19' height='19' viewBox='0 0 19 19'><defs><linearGradient id='yg' x1='0' y1='0' x2='0.3' y2='1'><stop offset='0' stop-color='#fae7a4'/><stop offset='1' stop-color='#f0cd5a'/></linearGradient></defs><path d='M2 1 H8 L10 4 V9 H2 Z' fill='url(#yg)' stroke='#c9a0a0' stroke-width='0.8'/><path d='M8 7 H14 L16 10 V18 H8 Z' fill='url(#yg)' stroke='#c9a0a0' stroke-width='0.8'/><path d='M6 6 L11 11' stroke='#d0213a' stroke-width='1.2'/></svg><div class='t' style='left:1311.0px;top:93.8px;font-size:13.2px;font-weight:400;color:#000;'>Open</div><svg class='a' style='left:1289px;top:117px;' width='19' height='19' viewBox='0 0 19 19'><defs><linearGradient id='yg' x1='0' y1='0' x2='0.3' y2='1'><stop offset='0' stop-color='#fae7a4'/><stop offset='1' stop-color='#f0cd5a'/></linearGradient></defs><path d='M3 1 H12 L14 4 V9 H3 Z' fill='url(#yg)' stroke='#999' stroke-width='0.8'/><path d='M3 9 H14 V13 L12 15 V18 H3 Z' fill='#f8f4f4' stroke='#c9a0a0' stroke-width='0.8'/><path d='M7 4 L13 10' stroke='#111' stroke-width='1.4'/><path d='M10 10 H13 V7' stroke='#111' stroke-width='1.2' fill='none'/></svg><div class='t' style='left:1311.0px;top:119.8px;font-size:13.2px;font-weight:400;color:#000;'>Fold Keep</div><div class='a' style='left:4px;top:172px;width:22px;height:130px;background:#eaedf9'></div><div class='a' style='left:4px;top:174px;width:20px;height:126px;background:#f0f0f0;border-right:1px solid #e2e2e2;border-bottom:1px solid #e2e2e2'></div><div class='t' style='left:-43px;top:217px;width:110px;text-align:center;transform:rotate(90deg);font-size:14.4px;color:#6b6b78'>Current Pieces</div><div class='a' style='left:26px;top:172px;width:1890px;height:110px;background:#f0f0f0;border-left:1px solid #b0b0b0'></div><div class='a' style='left:27px;top:200px;width:1889px;height:1px;background:#a0a0a0'></div><div class='a' style='left:27px;top:278px;width:1889px;height:4px;background:#e9ecf8'></div><svg class='a' style='left:27px;top:173px;' width='184' height='28' viewBox='0 0 184 28'><path d='M0 27.5 L27 0.5 H182.5 V27.5' fill='#fff' stroke='#a0a0a0'/></svg><svg class='a' style='left:210px;top:173px;' width='131' height='28' viewBox='0 0 131 28'><defs><linearGradient id='tg' x1='0' y1='0' x2='0' y2='1'><stop offset='0' stop-color='#f4f5fb'/><stop offset='0.45' stop-color='#e6e8f2'/><stop offset='0.55' stop-color='#b9bcd0'/><stop offset='1' stop-color='#b3b6cb'/></linearGradient></defs><path d='M0.5 27.5 V2 Q0.5 0.5 2 0.5 H128 Q129.5 0.5 129.5 2 V27.5' fill='url(#tg)' stroke='#9c9c9c'/></svg><svg class='a' style='left:341px;top:173px;' width='131' height='28' viewBox='0 0 131 28'><defs><linearGradient id='tg' x1='0' y1='0' x2='0' y2='1'><stop offset='0' stop-color='#f4f5fb'/><stop offset='0.45' stop-color='#e6e8f2'/><stop offset='0.55' stop-color='#b9bcd0'/><stop offset='1' stop-color='#b3b6cb'/></linearGradient></defs><path d='M0.5 27.5 V2 Q0.5 0.5 2 0.5 H128 Q129.5 0.5 129.5 2 V27.5' fill='url(#tg)' stroke='#9c9c9c'/></svg><svg class='a' style='left:59px;top:176px;' width='20' height='20' viewBox='0 0 20 20'><defs><linearGradient id='ti' x1='0' y1='0' x2='1' y2='1'><stop offset='0' stop-color='#f7e3a0'/><stop offset='1' stop-color='#e8c960'/></linearGradient></defs><path d='M1 1 H8 Q10 10 17 12 V19 H1 Z' fill='url(#ti)' stroke='#c9b98a'/></svg><svg class='a' style='left:218px;top:176px;' width='20' height='20' viewBox='0 0 20 20'><defs><linearGradient id='ti' x1='0' y1='0' x2='1' y2='1'><stop offset='0' stop-color='#f7e3a0'/><stop offset='1' stop-color='#e8c960'/></linearGradient></defs><path d='M1 1 H8 Q10 10 17 12 V19 H1 Z' fill='url(#ti)' stroke='#c9b98a'/></svg><svg class='a' style='left:349px;top:176px;' width='20' height='20' viewBox='0 0 20 20'><defs><linearGradient id='ti' x1='0' y1='0' x2='1' y2='1'><stop offset='0' stop-color='#f7e3a0'/><stop offset='1' stop-color='#e8c960'/></linearGradient></defs><path d='M1 1 H8 Q10 10 17 12 V19 H1 Z' fill='url(#ti)' stroke='#c9b98a'/></svg><div class='t' style='left:90.0px;top:180.1px;font-size:14.0px;font-weight:700;color:#000;'>Work Area 1</div><svg class='a' style='left:189px;top:180px;' width='12' height='12' viewBox='0 0 12 12'><path d='M1 1 L11 11 M11 1 L1 11' stroke='#444' stroke-width='1.6'/></svg><div class='t' style='left:249.0px;top:180.5px;font-size:13.6px;font-weight:400;color:#000;'>Work Area 2</div><div class='t' style='left:380.0px;top:180.5px;font-size:13.6px;font-weight:400;color:#000;'>Work Area 3</div><svg class='a' style='left:1900px;top:182px;' width='14' height='9' viewBox='0 0 14 9'><path d='M1 1 H13 L7 8 Z' fill='#333'/></svg><div class='a' style='left:27px;top:201px;width:1889px;height:74px;background:#f0f0f0'></div><div class='a' style='left:31px;top:204px;width:103px;height:38px;background:#e1e1e1;border:1px solid #b1b1b1'></div><svg class='a' style='left:31px;top:204px;' width='103' height='38' viewBox='0 0 103 38'><path d='M32 2 H63 L70 7 Q77 10 76 17 Q76 22 70 23 L65 25 L63 27 H32 Z' fill='#fdce7f' stroke='#111' stroke-width='1.1' stroke-linejoin='round'/></svg><div class='t' style='left:35.0px;top:227.9px;font-size:12.5px;font-weight:400;color:#111;'>0,0</div><svg class='a' style='left:121px;top:232px;' width='11' height='6' viewBox='0 0 11 6'><path d='M0 0.5 H2 M4 0.5 H6 M8 0.5 H10 M0 4.5 H10' stroke='#333'/></svg><div class='t' style='left:17.0px;top:249.3px;width:130px;text-align:center;font-size:13.2px;font-weight:400;color:#111;'>FT1DZ-M-SLV-2</div><div class='a' style='left:146px;top:204px;width:103px;height:38px;background:#e1e1e1;border:1px solid #b1b1b1'></div><svg class='a' style='left:146px;top:204px;' width='103' height='38' viewBox='0 0 103 38'><path d='M45 16 L55 6 L57 5 Q60 2 66 2 Q68 6 66 12 L65 14 L56 20 L52 26 Z' fill='#fdce7f' stroke='#111' stroke-width='1.1' stroke-linejoin='round'/></svg><div class='t' style='left:150.0px;top:227.9px;font-size:12.5px;font-weight:400;color:#111;'>0,0</div><svg class='a' style='left:236px;top:232px;' width='11' height='6' viewBox='0 0 11 6'><path d='M0 0.5 H2 M4 0.5 H6 M8 0.5 H10 M0 4.5 H10' stroke='#333'/></svg><div class='t' style='left:132.0px;top:249.3px;width:130px;text-align:center;font-size:13.2px;font-weight:400;color:#111;'>FT1DZ-M-SLV</div><div class='a' style='left:261px;top:204px;width:103px;height:38px;background:#e1e1e1;border:1px solid #b1b1b1'></div><svg class='a' style='left:261px;top:204px;' width='103' height='38' viewBox='0 0 103 38'><path d='M26 3 L45 2 L60 3 L68 2 L70 6 L82 7 L87 17 L80 19 L79 26 H24 L25 14 Z' fill='#fdce7f' stroke='#111' stroke-width='1.1' stroke-linejoin='round'/></svg><div class='t' style='left:265.0px;top:227.9px;font-size:12.5px;font-weight:400;color:#111;'>0,0</div><svg class='a' style='left:351px;top:232px;' width='11' height='6' viewBox='0 0 11 6'><path d='M0 0.5 H2 M4 0.5 H6 M8 0.5 H10 M0 4.5 H10' stroke='#333'/></svg><div class='t' style='left:247.0px;top:249.3px;width:130px;text-align:center;font-size:13.2px;font-weight:400;color:#111;'>FT1DZ-M-FRT</div><div class='a' style='left:376px;top:204px;width:103px;height:38px;background:#e1e1e1;border:1px solid #b1b1b1'></div><svg class='a' style='left:376px;top:204px;' width='103' height='38' viewBox='0 0 103 38'><path d='M25 3 H88 L90 9 L87 17 L77 19 L74 25 L60 24 L45 25 L24 27 Z' fill='#fdce7f' stroke='#111' stroke-width='1.1' stroke-linejoin='round'/></svg><div class='t' style='left:380.0px;top:227.9px;font-size:12.5px;font-weight:400;color:#111;'>0,0</div><svg class='a' style='left:466px;top:232px;' width='11' height='6' viewBox='0 0 11 6'><path d='M0 0.5 H2 M4 0.5 H6 M8 0.5 H10 M0 4.5 H10' stroke='#333'/></svg><div class='t' style='left:362.0px;top:249.3px;width:130px;text-align:center;font-size:13.2px;font-weight:400;color:#111;'>FT1DZ-M-BK</div><div class='a' style='left:491px;top:204px;width:103px;height:38px;background:#e1e1e1;border:1px solid #b1b1b1'></div><svg class='a' style='left:491px;top:204px;' width='103' height='38' viewBox='0 0 103 38'><path d='M18 12 L55 9 L80 5 L86 13 L60 18 L42 21 L20 22 Z' fill='#fdce7f' stroke='#111' stroke-width='1.1' stroke-linejoin='round'/></svg><div class='t' style='left:495.0px;top:227.9px;font-size:12.5px;font-weight:400;color:#111;'>0,0</div><svg class='a' style='left:582px;top:229px;' width='10' height='11' viewBox='0 0 10 11'><rect x='1.5' y='1.5' width='7' height='8' fill='none' stroke='#222'/><path d='M1 5.5 H9' stroke='#222'/></svg><div class='t' style='left:477.0px;top:249.3px;width:130px;text-align:center;font-size:13.2px;font-weight:400;color:#111;'>FT1DZ-D-CS</div><div class='a' style='left:606px;top:204px;width:103px;height:38px;background:#e1e1e1;border:1px solid #b1b1b1'></div><svg class='a' style='left:606px;top:204px;' width='103' height='38' viewBox='0 0 103 38'><path d='M21 3 H89 L91 9 L88 13 L73 13 L73 23 L22 23 Q19 13 21 3 Z' fill='#fdce7f' stroke='#111' stroke-width='1.1' stroke-linejoin='round'/></svg><div class='t' style='left:610.0px;top:227.9px;font-size:12.5px;font-weight:400;color:#111;'>0,0</div><svg class='a' style='left:696px;top:232px;' width='11' height='6' viewBox='0 0 11 6'><path d='M0 0.5 H2 M4 0.5 H6 M8 0.5 H10 M0 4.5 H10' stroke='#333'/></svg><div class='t' style='left:606.0px;top:249.3px;font-size:13.2px;font-weight:400;color:#111;'>FT1DZ-C-SLV-PL</div><div class='t' style='left:606.0px;top:263.8px;font-size:13.2px;font-weight:400;color:#111;'>KT</div><div class='a' style='left:721px;top:204px;width:103px;height:38px;background:#e1e1e1;border:1px solid #b1b1b1'></div><svg class='a' style='left:721px;top:204px;' width='103' height='38' viewBox='0 0 103 38'><path d='M50 2 H58 V26 H50 Z' fill='#fdce7f' stroke='#111' stroke-width='1.1' stroke-linejoin='round'/></svg><div class='t' style='left:725.0px;top:227.9px;font-size:12.5px;font-weight:400;color:#111;'>0,0</div><svg class='a' style='left:811px;top:232px;' width='11' height='6' viewBox='0 0 11 6'><path d='M0 0.5 H2 M4 0.5 H6 M8 0.5 H10 M0 4.5 H10' stroke='#333'/></svg><div class='t' style='left:707.0px;top:249.3px;width:130px;text-align:center;font-size:13.2px;font-weight:400;color:#111;'>FT1DZ-C-CUFF</div><div class='a' style='left:836px;top:204px;width:103px;height:38px;background:#e1e1e1;border:1px solid #b1b1b1'></div><svg class='a' style='left:836px;top:204px;' width='103' height='38' viewBox='0 0 103 38'><path d='M19 2 L88 4 L85 27 L19 22 Z' fill='#fdce7f' stroke='#111' stroke-width='1.1' stroke-linejoin='round'/></svg><div class='t' style='left:840.0px;top:227.9px;font-size:12.5px;font-weight:400;color:#111;'>0,0</div><svg class='a' style='left:926px;top:232px;' width='11' height='6' viewBox='0 0 11 6'><path d='M0 0.5 H2 M4 0.5 H6 M8 0.5 H10 M0 4.5 H10' stroke='#333'/></svg><div class='t' style='left:822.0px;top:249.3px;width:130px;text-align:center;font-size:13.2px;font-weight:400;color:#111;'>FT1DZ-C-COL</div><div class='a' style='left:951px;top:204px;width:103px;height:38px;background:#e1e1e1;border:1px solid #b1b1b1'></div><svg class='a' style='left:951px;top:204px;' width='103' height='38' viewBox='0 0 103 38'><path d='M42 3 L45 2 L68 25 L65 27 Z' fill='#fdce7f' stroke='#111' stroke-width='1.1' stroke-linejoin='round'/></svg><div class='t' style='left:955.0px;top:227.9px;font-size:12.5px;font-weight:400;color:#111;'>0,0</div><svg class='a' style='left:1041px;top:232px;' width='11' height='6' viewBox='0 0 11 6'><path d='M0 0.5 H2 M4 0.5 H6 M8 0.5 H10 M0 4.5 H10' stroke='#333'/></svg><div class='t' style='left:937.0px;top:249.3px;width:130px;text-align:center;font-size:13.2px;font-weight:400;color:#111;'>FT1DZ-C-BIN</div><div class='a' style='left:1066px;top:204px;width:103px;height:38px;background:#e1e1e1;border:1px solid #b1b1b1'></div><svg class='a' style='left:1066px;top:204px;' width='103' height='38' viewBox='0 0 103 38'><path d='M23 4 L35 2 L48 3 L57 2 L63 7 L71 8 L75 15 L71 17 L69 26 H23 Z' fill='#fdce7f' stroke='#111' stroke-width='1.1' stroke-linejoin='round'/></svg><div class='t' style='left:1070.0px;top:227.9px;font-size:12.5px;font-weight:400;color:#111;'>0,0</div><svg class='a' style='left:1156px;top:232px;' width='11' height='6' viewBox='0 0 11 6'><path d='M0 0.5 H2 M4 0.5 H6 M8 0.5 H10 M0 4.5 H10' stroke='#333'/></svg><div class='t' style='left:1052.0px;top:249.3px;width:130px;text-align:center;font-size:13.2px;font-weight:400;color:#111;'>DFGSDFG</div><div class='a' style='left:26px;top:275px;width:1890px;height:5px;background:#e9ecf8'></div><div class='a' style='left:26px;top:280px;width:1890px;height:710px;background:#f0f0f0;border:1px solid #a0a0a0;border-top:none'></div><svg class='a' style='left:30px;top:282px' width='1865' height='683'><rect width='1865' height='683' fill='#abc1e0'/><path d='M9.5 0V683M20.5 0V683M31.5 0V683M42.5 0V683M53.5 0V683M64.5 0V683M75.5 0V683M86.5 0V683M96.5 0V683M107.5 0V683M118.5 0V683M129.5 0V683M140.5 0V683M151.5 0V683M162.5 0V683M173.5 0V683M184.5 0V683M195.5 0V683M206.5 0V683M217.5 0V683M228.5 0V683M239.5 0V683M250.5 0V683M261.5 0V683M272.5 0V683M283.5 0V683M294.5 0V683M305.5 0V683M316.5 0V683M327.5 0V683M338.5 0V683M349.5 0V683M360.5 0V683M371.5 0V683M381.5 0V683M392.5 0V683M403.5 0V683M414.5 0V683M425.5 0V683M436.5 0V683M447.5 0V683M458.5 0V683M469.5 0V683M480.5 0V683M491.5 0V683M502.5 0V683M513.5 0V683M524.5 0V683M535.5 0V683M546.5 0V683M557.5 0V683M568.5 0V683M579.5 0V683M590.5 0V683M601.5 0V683M612.5 0V683M623.5 0V683M634.5 0V683M645.5 0V683M655.5 0V683M666.5 0V683M677.5 0V683M688.5 0V683M699.5 0V683M710.5 0V683M721.5 0V683M732.5 0V683M743.5 0V683M754.5 0V683M765.5 0V683M776.5 0V683M787.5 0V683M798.5 0V683M809.5 0V683M820.5 0V683M831.5 0V683M842.5 0V683M853.5 0V683M864.5 0V683M875.5 0V683M886.5 0V683M897.5 0V683M908.5 0V683M919.5 0V683M930.5 0V683M940.5 0V683M951.5 0V683M962.5 0V683M973.5 0V683M984.5 0V683M995.5 0V683M1006.5 0V683M1017.5 0V683M1028.5 0V683M1039.5 0V683M1050.5 0V683M1061.5 0V683M1072.5 0V683M1083.5 0V683M1094.5 0V683M1105.5 0V683M1116.5 0V683M1127.5 0V683M1138.5 0V683M1149.5 0V683M1160.5 0V683M1171.5 0V683M1182.5 0V683M1193.5 0V683M1204.5 0V683M1214.5 0V683M1225.5 0V683M1236.5 0V683M1247.5 0V683M1258.5 0V683M1269.5 0V683M1280.5 0V683M1291.5 0V683M1302.5 0V683M1313.5 0V683M1324.5 0V683M1335.5 0V683M1346.5 0V683M1357.5 0V683M1368.5 0V683M1379.5 0V683M1390.5 0V683M1401.5 0V683M1412.5 0V683M1423.5 0V683M1434.5 0V683M1445.5 0V683M1456.5 0V683M1467.5 0V683M1478.5 0V683M1489.5 0V683M1499.5 0V683M1510.5 0V683M1521.5 0V683M1532.5 0V683M1543.5 0V683M1554.5 0V683M1565.5 0V683M1576.5 0V683M1587.5 0V683M1598.5 0V683M1609.5 0V683M1620.5 0V683M1631.5 0V683M1642.5 0V683M1653.5 0V683M1664.5 0V683M1675.5 0V683M1686.5 0V683M1697.5 0V683M1708.5 0V683M1719.5 0V683M1730.5 0V683M1741.5 0V683M1752.5 0V683M1763.5 0V683M1774.5 0V683M1784.5 0V683M1795.5 0V683M1806.5 0V683M1817.5 0V683M1828.5 0V683M1839.5 0V683M1850.5 0V683M1861.5 0V683M0 3.5H1865M0 14.5H1865M0 25.5H1865M0 36.5H1865M0 47.5H1865M0 58.5H1865M0 69.5H1865M0 80.5H1865M0 91.5H1865M0 102.5H1865M0 113.5H1865M0 124.5H1865M0 135.5H1865M0 145.5H1865M0 156.5H1865M0 167.5H1865M0 178.5H1865M0 189.5H1865M0 200.5H1865M0 211.5H1865M0 222.5H1865M0 233.5H1865M0 244.5H1865M0 255.5H1865M0 266.5H1865M0 277.5H1865M0 288.5H1865M0 299.5H1865M0 310.5H1865M0 321.5H1865M0 332.5H1865M0 343.5H1865M0 354.5H1865M0 365.5H1865M0 376.5H1865M0 387.5H1865M0 398.5H1865M0 409.5H1865M0 420.5H1865M0 430.5H1865M0 441.5H1865M0 452.5H1865M0 463.5H1865M0 474.5H1865M0 485.5H1865M0 496.5H1865M0 507.5H1865M0 518.5H1865M0 529.5H1865M0 540.5H1865M0 551.5H1865M0 562.5H1865M0 573.5H1865M0 584.5H1865M0 595.5H1865M0 606.5H1865M0 617.5H1865M0 628.5H1865M0 639.5H1865M0 650.5H1865M0 661.5H1865M0 672.5H1865' stroke='#6b92bc' stroke-width='1' shape-rendering='crispEdges' fill='none'/></svg><div class='a' style='left:28px;top:280px;width:1888px;height:2px;background:#6e6e6e'></div><div class='a' style='left:28px;top:280px;width:2px;height:706px;background:#6e6e6e'></div><div class='a' style='left:1895px;top:282px;width:21px;height:683px;background:#f0f0f0'></div><div class='a' style='left:1897px;top:594px;width:17px;height:158px;background:#cdcdcd'></div><svg class='a' style='left:1899px;top:287px;' width='13' height='10' viewBox='0 0 13 10'><path d='M1.5 8 L6.5 3 L11.5 8' stroke='#555' stroke-width='1.6' fill='none'/></svg><svg class='a' style='left:1899px;top:948px;' width='13' height='10' viewBox='0 0 13 10'><path d='M1.5 2 L6.5 7 L11.5 2' stroke='#555' stroke-width='1.6' fill='none'/></svg><div class='a' style='left:30px;top:965px;width:1865px;height:21px;background:#f0f0f0'></div><div class='a' style='left:490px;top:967px;width:1405px;height:17px;background:#cdcdcd'></div><svg class='a' style='left:34px;top:969px;' width='12' height='14' viewBox='0 0 12 14'><path d='M8 2 L3 7 L8 12' stroke='#555' stroke-width='1.8' fill='none'/></svg><div class='a' style='left:30px;top:986px;width:1886px;height:4px;background:#fff;border-top:1px solid #e2e2e2;border-bottom:1px solid #a0a0a0'></div><svg class='a' style='left:0;top:0' width='1920' height='1080'><defs><clipPath id='cc'><rect x='30' y='282' width='1865' height='683'/></clipPath></defs><g clip-path='url(#cc)'><path d='M84 282 L240 438 L265 413 L133 282' fill='none' stroke='#0000ff' stroke-width='0.85' shape-rendering='crispEdges'/><path d='M240 430 L234.7 440.5 H245.3 Z' fill='none' stroke='#000' stroke-width='1.1' shape-rendering='crispEdges'/><path d='M265 405 L259.7 415.5 H270.3 Z' fill='none' stroke='#000' stroke-width='1.1' shape-rendering='crispEdges'/><path d='M92 323 H207' fill='none' stroke='#000' stroke-width='0.85' shape-rendering='crispEdges' stroke-dasharray='5 4'/><path d='M92 315 L86.7 325.5 H97.3 Z' fill='none' stroke='#000' stroke-width='1.1' shape-rendering='crispEdges'/><path d='M207 315 L201.7 325.5 H212.3 Z' fill='none' stroke='#000' stroke-width='1.1' shape-rendering='crispEdges'/><path d='M135 308 V292 M131 297 L135 292 L139 297 M135 308 H163 M158 304 L163 308 L158 311' fill='none' stroke='#000' stroke-width='0.85' shape-rendering='crispEdges'/><path d='M181 509.5 H269.5 V772 H181 Z' fill='none' stroke='#0000ff' stroke-width='0.85' shape-rendering='crispEdges'/><path d='M181 503 L175.7 513.5 H186.3 Z' fill='none' stroke='#000' stroke-width='1.1' shape-rendering='crispEdges'/><path d='M270 503 L264.7 513.5 H275.3 Z' fill='none' stroke='#000' stroke-width='1.1' shape-rendering='crispEdges'/><path d='M181 766 L175.7 776.5 H186.3 Z' fill='none' stroke='#000' stroke-width='1.1' shape-rendering='crispEdges'/><path d='M270 766 L264.7 776.5 H275.3 Z' fill='none' stroke='#000' stroke-width='1.1' shape-rendering='crispEdges'/><path d='M215 516 L209.7 526.5 H220.3 Z' fill='none' stroke='#000' stroke-width='1.1' shape-rendering='crispEdges'/><path d='M254 516 L248.7 526.5 H259.3 Z' fill='none' stroke='#000' stroke-width='1.1' shape-rendering='crispEdges'/><path d='M215 530 L209.7 540.5 H220.3 Z' fill='none' stroke='#000' stroke-width='1.1' shape-rendering='crispEdges'/><path d='M254 530 L248.7 540.5 H259.3 Z' fill='none' stroke='#000' stroke-width='1.1' shape-rendering='crispEdges'/><path d='M181 642 L175.7 652.5 H186.3 Z' fill='none' stroke='#000' stroke-width='1.1' shape-rendering='crispEdges'/><path d='M324 592 L318.7 602.5 H329.3 Z' fill='none' stroke='#000' stroke-width='1.1' shape-rendering='crispEdges'/><path d='M368 620 L362.7 630.5 H373.3 Z' fill='none' stroke='#000' stroke-width='1.1' shape-rendering='crispEdges'/><path d='M358 606 L352.7 616.5 H363.3 Z' fill='none' stroke='#000' stroke-width='1.1' shape-rendering='crispEdges'/><path d='M358 634 L352.7 644.5 H363.3 Z' fill='none' stroke='#000' stroke-width='1.1' shape-rendering='crispEdges'/><path d='M324 677 L318.7 687.5 H329.3 Z' fill='none' stroke='#000' stroke-width='1.1' shape-rendering='crispEdges'/><path d='M205 606 L199.7 616.5 H210.3 Z' fill='none' stroke='#000' stroke-width='1.1' shape-rendering='crispEdges'/><path d='M205 659 L199.7 669.5 H210.3 Z' fill='none' stroke='#000' stroke-width='1.1' shape-rendering='crispEdges'/><path d='M225 622 L219.7 632.5 H230.3 Z' fill='none' stroke='#000' stroke-width='1.1' shape-rendering='crispEdges'/><path d='M307 622 L301.7 632.5 H312.3 Z' fill='none' stroke='#000' stroke-width='1.1' shape-rendering='crispEdges'/><path d='M203 632 L197.7 642.5 H208.3 Z' fill='none' stroke='#000' stroke-width='1.1' shape-rendering='crispEdges'/><path d='M324 632 L318.7 642.5 H329.3 Z' fill='none' stroke='#000' stroke-width='1.1' shape-rendering='crispEdges'/><path d='M324 659 L318.7 669.5 H329.3 Z' fill='none' stroke='#000' stroke-width='1.1' shape-rendering='crispEdges'/><path d='M220 640 L214.7 650.5 H225.3 Z' fill='none' stroke='#000' stroke-width='1.1' shape-rendering='crispEdges'/><path d='M205 610 H358 L369 626 L358 637 H323.5 V664.5 H205 Q200 637 205 610' fill='none' stroke='#0000ff' stroke-width='0.85' shape-rendering='crispEdges'/><path d='M221 628 H310 M204 637 H324 M182 647 H218 M324 601 V690' fill='none' stroke='#000' stroke-width='0.85' shape-rendering='crispEdges' stroke-dasharray='4 3'/><path d='M254 570 H268 M254 665 H268' fill='none' stroke='#000' stroke-width='0.85' shape-rendering='crispEdges'/><path d='M250 612 V598 M246 602 L250 598 L254 602 M250 612 H281 M276 608 L281 612 L276 615 M186 632 V618 M182 622 L186 618 L190 622 M186 632 H214 M209 628 L214 632 L209 635' fill='none' stroke='#000' stroke-width='0.85' shape-rendering='crispEdges'/><path d='M592 339 L835 358 Q870 360 910 357 L995 352 L1180 345 L1259 353 Q1257 372 1258 395 Q1262 425 1280 442 L1232 549 L1163 531 Q1130 526 1120 527 Q1060 535 1048 548 Q1025 565 1020 598 L994 593 L841 570 L814 570 L596 603 Q584 475 592 339' fill='none' stroke='#0000ff' stroke-width='0.85' shape-rendering='crispEdges'/><path d='M714 385 H994 M834 358 V459 M994 355 V593 M821 485 V567' fill='none' stroke='#0000ff' stroke-width='0.85' shape-rendering='crispEdges' stroke-dasharray='4 3'/><path d='M674 469 Q760 462 834 460 Q930 460 994 470 H1036 M674 470 Q760 476 821 484 H834 Q930 484 994 474' fill='none' stroke='#0000ff' stroke-width='0.85' shape-rendering='crispEdges' stroke-dasharray='4 3'/><path d='M1180 355 Q1185 420 1262 481' fill='none' stroke='#0000ff' stroke-width='0.85' shape-rendering='crispEdges' stroke-dasharray='5 4'/><path d='M592 333 L586.7 343.5 H597.3 Z' fill='none' stroke='#000' stroke-width='1.1' shape-rendering='crispEdges'/><path d='M596 597 L590.7 607.5 H601.3 Z' fill='none' stroke='#000' stroke-width='1.1' shape-rendering='crispEdges'/><path d='M835 353 L829.7 363.5 H840.3 Z' fill='none' stroke='#000' stroke-width='1.1' shape-rendering='crispEdges'/><path d='M994 348 L988.7 358.5 H999.3 Z' fill='none' stroke='#000' stroke-width='1.1' shape-rendering='crispEdges'/><path d='M714 380 L708.7 390.5 H719.3 Z' fill='none' stroke='#000' stroke-width='1.1' shape-rendering='crispEdges'/><path d='M991 380 L985.7 390.5 H996.3 Z' fill='none' stroke='#000' stroke-width='1.1' shape-rendering='crispEdges'/><path d='M674 463 L668.7 473.5 H679.3 Z' fill='none' stroke='#000' stroke-width='1.1' shape-rendering='crispEdges'/><path d='M834 454 L828.7 464.5 H839.3 Z' fill='none' stroke='#000' stroke-width='1.1' shape-rendering='crispEdges'/><path d='M821 479 L815.7 489.5 H826.3 Z' fill='none' stroke='#000' stroke-width='1.1' shape-rendering='crispEdges'/><path d='M834 479 L828.7 489.5 H839.3 Z' fill='none' stroke='#000' stroke-width='1.1' shape-rendering='crispEdges'/><path d='M994 466 L988.7 476.5 H999.3 Z' fill='none' stroke='#000' stroke-width='1.1' shape-rendering='crispEdges'/><path d='M994 473 L988.7 483.5 H999.3 Z' fill='none' stroke='#000' stroke-width='1.1' shape-rendering='crispEdges'/><path d='M1036 466 L1030.7 476.5 H1041.3 Z' fill='none' stroke='#000' stroke-width='1.1' shape-rendering='crispEdges'/><path d='M821 562 L815.7 572.5 H826.3 Z' fill='none' stroke='#000' stroke-width='1.1' shape-rendering='crispEdges'/><path d='M994 588 L988.7 598.5 H999.3 Z' fill='none' stroke='#000' stroke-width='1.1' shape-rendering='crispEdges'/><path d='M1020 592 L1014.7 602.5 H1025.3 Z' fill='none' stroke='#000' stroke-width='1.1' shape-rendering='crispEdges'/><path d='M1232 543 L1226.7 553.5 H1237.3 Z' fill='none' stroke='#000' stroke-width='1.1' shape-rendering='crispEdges'/><path d='M1280 437 L1274.7 447.5 H1285.3 Z' fill='none' stroke='#000' stroke-width='1.1' shape-rendering='crispEdges'/><path d='M1262 476 L1256.7 486.5 H1267.3 Z' fill='none' stroke='#000' stroke-width='1.1' shape-rendering='crispEdges'/><path d='M1259 349 L1263 353 L1259 357 L1255 353 Z' fill='none' stroke='#000' stroke-width='1'/><path d='M1174 341 H1186 L1180 350 Z' fill='none' stroke='#000' stroke-width='0.85' shape-rendering='crispEdges'/><path d='M1035 348 V364 M1059 347 V363 M1053 525 L1060 545 M1075 520 L1080 537 M1165 515 L1163 531 M950 573 L948 587' fill='none' stroke='#000' stroke-width='0.85' shape-rendering='crispEdges'/><path d='M836 375 V348 M832 352 L836 348 L840 352 M836 372 H866 M861 368 L866 372 L861 375' fill='none' stroke='#000' stroke-width='0.85' shape-rendering='crispEdges'/><path d='M696 463 V475 M690 469 H702 M1006 467 V479 M1000 473 H1012' fill='none' stroke='#000' stroke-width='0.85' shape-rendering='crispEdges'/><path d='M597 626 L824 654.5 Q860 660 880 656 L950 644.5 L970 635 L1013 636 L1068 639 Q1066 680 1085 695 Q1100 712 1120 713 L1174 713 L1244.5 705 L1283 812 Q1249 818 1225 835 Q1200 860 1200 903 H550' fill='none' stroke='#0000ff' stroke-width='0.85' shape-rendering='crispEdges'/><path d='M597 626 Q580 650 576 660 Q565 685 561 719 Q552 800 550 831 L550 903' fill='none' stroke='#ff0000' stroke-width='0.85' shape-rendering='crispEdges'/><path d='M566 832 H999 Q1140 810 1272 781' fill='none' stroke='#000' stroke-width='0.85' shape-rendering='crispEdges' stroke-dasharray='5 5'/><path d='M602 887 H1040 V639 M824 654 V887' fill='none' stroke='#000' stroke-width='0.85' shape-rendering='crispEdges' stroke-dasharray='5 5'/><path d='M722 768 Q770 752 824 754 Q900 756 952 766 M722 768 Q770 782 824 781 Q900 782 952 770 M735 763 Q780 757 824 759 Q880 760 938 764 M735 773 Q780 778 824 777 Q880 776 938 772 M722 768 H962 M962 768 H983 M1007 768 H1009 M990 740 L995 755' fill='none' stroke='#000' stroke-width='0.85' shape-rendering='crispEdges' stroke-dasharray='5 4'/><path d='M703 766 H710 M703 770 H710 M714 762 V774 M717 762 V774 M944 762 V774 M947 762 V774 M951 766 H958 M951 770 H958' fill='none' stroke='#000' stroke-width='0.85' shape-rendering='crispEdges'/><path d='M950 645 L989 735 M972 638 L990 735 M994 636 L990 735' fill='none' stroke='#000' stroke-width='0.85' shape-rendering='crispEdges' stroke-dasharray='4 3'/><circle cx='995' cy='767' r='13' fill='none' stroke='#000' stroke-width='1' stroke-dasharray='4 3'/><path d='M824 649 L818.7 659.5 H829.3 Z' fill='none' stroke='#000' stroke-width='1.1' shape-rendering='crispEdges'/><path d='M950 640 L944.7 650.5 H955.3 Z' fill='none' stroke='#000' stroke-width='1.1' shape-rendering='crispEdges'/><path d='M972 633 L966.7 643.5 H977.3 Z' fill='none' stroke='#000' stroke-width='1.1' shape-rendering='crispEdges'/><path d='M994 631 L988.7 641.5 H999.3 Z' fill='none' stroke='#000' stroke-width='1.1' shape-rendering='crispEdges'/><path d='M1041 633 L1035.7 643.5 H1046.3 Z' fill='none' stroke='#000' stroke-width='1.1' shape-rendering='crispEdges'/><path d='M1068 633 L1062.7 643.5 H1073.3 Z' fill='none' stroke='#000' stroke-width='1.1' shape-rendering='crispEdges'/><path d='M1244 700 L1238.7 710.5 H1249.3 Z' fill='none' stroke='#000' stroke-width='1.1' shape-rendering='crispEdges'/><path d='M1270 774 L1264.7 784.5 H1275.3 Z' fill='none' stroke='#000' stroke-width='1.1' shape-rendering='crispEdges'/><path d='M1283 807 L1277.7 817.5 H1288.3 Z' fill='none' stroke='#000' stroke-width='1.1' shape-rendering='crispEdges'/><path d='M1200 898 L1194.7 908.5 H1205.3 Z' fill='none' stroke='#000' stroke-width='1.1' shape-rendering='crispEdges'/><path d='M602 882 L596.7 892.5 H607.3 Z' fill='none' stroke='#000' stroke-width='1.1' shape-rendering='crispEdges'/><path d='M824 882 L818.7 892.5 H829.3 Z' fill='none' stroke='#000' stroke-width='1.1' shape-rendering='crispEdges'/><path d='M1041 882 L1035.7 892.5 H1046.3 Z' fill='none' stroke='#000' stroke-width='1.1' shape-rendering='crispEdges'/><path d='M1109 884 L1103.7 894.5 H1114.3 Z' fill='none' stroke='#000' stroke-width='1.1' shape-rendering='crispEdges'/><path d='M692 761 L686.7 771.5 H697.3 Z' fill='none' stroke='#000' stroke-width='1.1' shape-rendering='crispEdges'/><path d='M824 748 L818.7 758.5 H829.3 Z' fill='none' stroke='#000' stroke-width='1.1' shape-rendering='crispEdges'/><path d='M824 775 L818.7 785.5 H829.3 Z' fill='none' stroke='#000' stroke-width='1.1' shape-rendering='crispEdges'/><path d='M966 761 L960.7 771.5 H971.3 Z' fill='none' stroke='#000' stroke-width='1.1' shape-rendering='crispEdges'/><path d='M995 762 L989.7 772.5 H1000.3 Z' fill='none' stroke='#000' stroke-width='1.1' shape-rendering='crispEdges'/><path d='M1009 762 L1003.7 772.5 H1014.3 Z' fill='none' stroke='#000' stroke-width='1.1' shape-rendering='crispEdges'/><path d='M999 827 L993.7 837.5 H1004.3 Z' fill='none' stroke='#000' stroke-width='1.1' shape-rendering='crispEdges'/><path d='M597 621 L602 626 L597 631 L592 626 Z' fill='none' stroke='#000' stroke-width='1'/><path d='M550 898 L555 903 L550 908 L545 903 Z' fill='none' stroke='#000' stroke-width='1'/><path d='M566 827 L571 832 L566 837 L561 832 Z' fill='none' stroke='#000' stroke-width='1'/><path d='M984 727 L990 737 L996 727 Z' fill='none' stroke='#000' stroke-width='0.85' shape-rendering='crispEdges'/><path d='M678 636 L676 652 M1070 703 L1082 693 M1175 713 L1176 728' fill='none' stroke='#000' stroke-width='0.85' shape-rendering='crispEdges'/><path d='M840 872 V858 M836 862 L840 858 L844 862 M840 872 H870 M865 868 L870 872 L865 875' fill='none' stroke='#000' stroke-width='0.85' shape-rendering='crispEdges'/><path d='M984 707 V719 M978 713 H990 M712 763 V772 M705 767 H715' fill='none' stroke='#000' stroke-width='0.85' shape-rendering='crispEdges'/><path d='M513 714 L610 728 M513 714 L522 710 M513 714 L521 718 M610 728 L600 722 M610 728 L599 732' fill='none' stroke='#f0f020' stroke-width='0.85' shape-rendering='crispEdges'/><path d='M527 728 H545 M536 720 V737 M577 737 H590' fill='none' stroke='#f0f020' stroke-width='0.85' shape-rendering='crispEdges'/><rect x='557' y='715' width='8' height='8' fill='none' stroke='#e01010' stroke-width='1.2'/><text x='1082' y='888.5' font-family='Liberation Mono' font-size='10.3' font-weight='700' fill='#000'>centre front</text><text x='1080' y='529' font-family='Liberation Sans' font-size='23' fill='#ffff00'>23.16</text><text x='779' y='571' font-family='Liberation Sans' font-size='23' fill='#ffff00'>39.20</text><text x='1101' y='715' font-family='Liberation Sans' font-size='23' fill='#ffff00'>20.83</text></g></svg><div class='a' style='left:32px;top:1000px;width:312px;height:24px;background:#f0f0f0;border:1px solid #7a7a7a;'></div><div class='a' style='left:350px;top:1000px;width:312px;height:24px;background:#f0f0f0;border:1px solid #7a7a7a;'></div><div class='a' style='left:668px;top:1000px;width:23px;height:24px;background:#f0f0f0;border:1px solid #0078d7;border-width:2px'></div><div class='t' style='left:669.5px;top:1006.8px;width:20px;text-align:center;font-size:12px;font-weight:400;color:#000;'>...</div><div class='a' style='left:700px;top:1000px;width:156px;height:24px;background:#f0f0f0;border:1px solid #cfcfcf;'></div><div class='a' style='left:832px;top:1001px;width:23px;height:22px;background:#f7f7f7'></div><svg class='a' style='left:838px;top:1008px;' width='12' height='8' viewBox='0 0 12 8'><path d='M1 1 L6 6 L11 1' stroke='#555' stroke-width='1.2' fill='none'/></svg><div class='a' style='left:862px;top:1000px;width:50px;height:24px;background:#e1e1e1;border:1px solid #adadad;'></div><div class='t' style='left:866.0px;top:1005.7px;font-size:13.3px;font-weight:400;color:#000;'>D1</div><svg class='a' style='left:895px;top:1008px;' width='12' height='8' viewBox='0 0 12 8'><path d='M1 1 L6 6 L11 1' stroke='#333' stroke-width='1.2' fill='none'/></svg><div class='a' style='left:919px;top:1000px;width:134px;height:24px;background:#e1e1e1;border:1px solid #adadad;'></div><div class='t' style='left:911.0px;top:1005.7px;width:150px;text-align:center;font-size:13.3px;font-weight:400;color:#000;'>Show Size Tooltip</div><div class='a' style='left:1219px;top:1000px;width:44px;height:24px;background:#e1e1e1;border:1px solid #adadad;'></div><div class='t' style='left:1166.0px;top:1005.7px;width:150px;text-align:center;font-size:13.3px;font-weight:400;color:#000;'>Grid</div><div class='a' style='left:1267px;top:1000px;width:44px;height:24px;background:#e1e1e1;border:1px solid #adadad;'></div><div class='t' style='left:1214.0px;top:1005.7px;width:150px;text-align:center;font-size:13.3px;font-weight:400;color:#000;'>Geom</div><div class='a' style='left:1315px;top:1000px;width:54px;height:24px;background:#e1e1e1;border:1px solid #adadad;'></div><div class='t' style='left:1267.0px;top:1005.7px;width:150px;text-align:center;font-size:13.3px;font-weight:400;color:#000;'>Intrsct</div><div class='a' style='left:1371px;top:1000px;width:48px;height:24px;background:#e1e1e1;border:1px solid #adadad;'></div><div class='t' style='left:1320.0px;top:1005.7px;width:150px;text-align:center;font-size:13.3px;font-weight:400;color:#000;'>Prec</div><div class='a' style='left:1519px;top:1000px;width:78px;height:24px;background:#e1e1e1;border:1px solid #adadad;'></div><div class='t' style='left:1483.0px;top:1005.7px;width:150px;text-align:center;font-size:13.3px;font-weight:400;color:#000;'>Smoothing</div><div class='a' style='left:1663px;top:1000px;width:108px;height:24px;background:#e1e1e1;border:1px solid #adadad;'></div><div class='t' style='left:1642.0px;top:1005.7px;width:150px;text-align:center;font-size:13.3px;font-weight:400;color:#000;'>Notch Shapes</div><div class='a' style='left:1601px;top:1000px;width:58px;height:24px;background:#e5f1fb;border:1px solid #0078d7;'></div><div class='t' style='left:1555.0px;top:1005.7px;width:150px;text-align:center;font-size:13.3px;font-weight:400;color:#000;'>Seams</div><div class='a' style='left:1775px;top:1000px;width:44px;height:24px;background:#e5f1fb;border:1px solid #0078d7;'></div><div class='t' style='left:1722.0px;top:1005.7px;width:150px;text-align:center;font-size:13.3px;font-weight:400;color:#000;'>Grid</div><div class='a' style='left:1058px;top:1000px;width:49px;height:24px;background:#f4f4f4;border:1px solid #7a7a7a;'></div><div class='a' style='left:1111px;top:1000px;width:49px;height:24px;background:#f4f4f4;border:1px solid #7a7a7a;'></div><div class='t' style='left:1110.5px;top:1005.7px;width:50px;text-align:center;font-size:13.3px;font-weight:400;color:#000;'>cm</div><div class='t' style='left:1164.0px;top:1005.7px;font-size:13.3px;font-weight:400;color:#000;'>Snap to:</div><div class='a' style='left:1424px;top:1000px;width:50px;height:24px;background:#f0f0f0;border:1px solid #d0d0d0;'></div><div class='t' style='left:1478.0px;top:1005.7px;font-size:13.3px;font-weight:400;color:#000;'>Show:</div><div class='a' style='left:4px;top:1030px;width:1912px;height:46px;background:#1d1d1d'></div><div class='a' style='left:60px;top:1030px;width:430px;height:46px;background:#f1f1f1'></div><svg class='a' style='left:19px;top:1045px;' width='22' height='22' viewBox='0 0 22 22'><path d='M0 2.5 L9.5 1.2 V10.3 H0 Z M10.5 1 L21 -0.3 V10.3 H10.5 Z M0 11.3 H9.5 V20.5 L0 19.2 Z M10.5 11.3 H21 V22 L10.5 20.6 Z' fill='#fff'/></svg><svg class='a' style='left:75px;top:1043px;' width='22' height='24' viewBox='0 0 22 24'><circle cx='13' cy='9' r='7' fill='none' stroke='#111' stroke-width='1.6'/><path d='M8 14 L1.5 21' stroke='#111' stroke-width='1.8'/></svg><div class='t' style='left:110.0px;top:1046.5px;font-size:18.3px;font-weight:400;color:#222;'>Type here to search</div><div class='a' style='left:1312px;top:1030px;width:100px;height:46px;background:#3b3b3b'></div><svg class='a' style='left:503px;top:1042px;' width='32' height='28' viewBox='0 0 32 28'><rect x='9' y='3' width='20' height='22' rx='2' fill='#1f8fe0'/><path d='M9 13 L19 19 L29 13 V25 H9 Z' fill='#28a8ea'/><rect x='2' y='8' width='15' height='15' rx='2' fill='#0f64b8'/><circle cx='9.5' cy='15.5' r='4' fill='none' stroke='#fff' stroke-width='2'/></svg><svg class='a' style='left:558px;top:1040px;' width='24' height='30' viewBox='0 0 24 30'><rect x='1' y='1' width='22' height='28' rx='2' fill='#6f7780'/><rect x='4' y='4' width='16' height='5' fill='#4fc3f7'/><rect x='4.0' y='11.0' width='4' height='4' fill='#ddd'/><rect x='9.5' y='11.0' width='4' height='4' fill='#ddd'/><rect x='15.0' y='11.0' width='4' height='4' fill='#ddd'/><rect x='4.0' y='16.5' width='4' height='4' fill='#ddd'/><rect x='9.5' y='16.5' width='4' height='4' fill='#ddd'/><rect x='15.0' y='16.5' width='4' height='4' fill='#ddd'/><rect x='4.0' y='22.0' width='4' height='4' fill='#ddd'/><rect x='9.5' y='22.0' width='4' height='4' fill='#ddd'/><rect x='15.0' y='22.0' width='4' height='4' fill='#ddd'/></svg><svg class='a' style='left:607px;top:1040px;' width='32' height='30' viewBox='0 0 32 30'><ellipse cx='14' cy='10' rx='12' ry='8' fill='#ddd' stroke='#c33' stroke-width='2'/><circle cx='14' cy='22' r='4' fill='none' stroke='#2d9ae0' stroke-width='2'/><circle cx='24' cy='22' r='4' fill='none' stroke='#2d9ae0' stroke-width='2'/></svg><svg class='a' style='left:660px;top:1041px;' width='22' height='28' viewBox='0 0 22 28'><path d='M1 3 L8 1 V6 H19 V26 H8 L1 28 Z' fill='#f2c94c'/><path d='M8 1 V28' stroke='#d9a92b'/></svg><div class='t' style='left:692.0px;top:1048.0px;font-size:15.3px;font-weight:400;color:#fff;letter-spacing:-0.3px'>Files t...</div><svg class='a' style='left:762px;top:1040px;' width='30' height='30' viewBox='0 0 30 30'><circle cx='15' cy='15' r='14' fill='#dd4b3e'/><path d='M15 15 L27.1 22 A14 14 0 0 1 15 29 Z' fill='#ffcd46'/><path d='M15 15 L15 29 A14 14 0 0 1 2.9 8 L15 15 Z' fill='#1da462'/><path d='M15 15 L27.1 22 A14 14 0 0 1 15 29 Z' fill='#ffcd46'/><circle cx='15' cy='15' r='6' fill='#fff'/><circle cx='15' cy='15' r='4.5' fill='#4c8bf5'/></svg><svg class='a' style='left:814px;top:1040px;' width='30' height='30' viewBox='0 0 30 30'><circle cx='15' cy='15' r='13' fill='none' stroke='#1e90ff' stroke-width='2'/><text x='15' y='22' font-size='20' font-style='italic' font-weight='700' text-anchor='middle' fill='#1e90ff' font-family='Liberation Sans'>C</text></svg><svg class='a' style='left:866px;top:1039px;' width='28' height='32' viewBox='0 0 28 32'><path d='M14 1 Q26 16 24 22 A10 10 0 0 1 4 22 Q2 16 14 1 Z' fill='#e8438c'/><path d='M6 20 Q14 12 24 20 A10 10 0 0 1 4 22 Z' fill='#5b7cf0'/></svg><svg class='a' style='left:917px;top:1040px;' width='30' height='30' viewBox='0 0 30 30'><rect x='1' y='1' width='28' height='28' rx='5' fill='#2f9a3a'/><text x='15' y='24' font-size='22' font-weight='700' text-anchor='middle' fill='#fff' font-family='Liberation Sans'>H</text></svg><svg class='a' style='left:969px;top:1040px;' width='30' height='30' viewBox='0 0 30 30'><circle cx='15' cy='15' r='13.5' fill='#2b2b2b' stroke='#ddd' stroke-width='1.5'/><circle cx='15' cy='15' r='9' fill='none' stroke='#bbb' stroke-width='2' stroke-dasharray='9 5'/></svg><svg class='a' style='left:1017px;top:1040px;' width='32' height='32' viewBox='0 0 32 32'><circle cx='20' cy='6' r='4' fill='#7b83eb'/><rect x='13' y='11' width='14' height='14' rx='5' fill='#5059c9'/><circle cx='12' cy='5' r='5' fill='#7b83eb'/><rect x='5' y='11' width='16' height='16' rx='4' fill='#7b83eb'/><rect x='1' y='8' width='14' height='14' rx='2' fill='#4b53bc'/><text x='8' y='19.5' font-size='11' font-weight='700' text-anchor='middle' fill='#fff' font-family='Liberation Sans'>T</text><circle cx='24' cy='24' r='6' fill='#c4314b' stroke='#fff' stroke-width='1.2'/><rect x='20.5' y='23' width='7' height='2' fill='#fff'/></svg><div class='t' style='left:1052.0px;top:1048.0px;font-size:15.3px;font-weight:400;color:#fff;letter-spacing:-0.3px'>Meeti...</div><svg class='a' style='left:1117px;top:1040px;' width='32' height='32' viewBox='0 0 32 32'><circle cx='20' cy='6' r='4' fill='#7b83eb'/><rect x='13' y='11' width='14' height='14' rx='5' fill='#5059c9'/><circle cx='12' cy='5' r='5' fill='#7b83eb'/><rect x='5' y='11' width='16' height='16' rx='4' fill='#7b83eb'/><rect x='1' y='8' width='14' height='14' rx='2' fill='#4b53bc'/><text x='8' y='19.5' font-size='11' font-weight='700' text-anchor='middle' fill='#fff' font-family='Liberation Sans'>T</text></svg><div class='t' style='left:1152.0px;top:1048.0px;font-size:15.3px;font-weight:400;color:#fff;letter-spacing:-0.3px'>Meeti...</div><svg class='a' style='left:1219px;top:1040px;' width='32' height='32' viewBox='0 0 32 32'><circle cx='20' cy='6' r='4' fill='#7b83eb'/><rect x='13' y='11' width='14' height='14' rx='5' fill='#5059c9'/><circle cx='12' cy='5' r='5' fill='#7b83eb'/><rect x='5' y='11' width='16' height='16' rx='4' fill='#7b83eb'/><rect x='1' y='8' width='14' height='14' rx='2' fill='#4b53bc'/><text x='8' y='19.5' font-size='11' font-weight='700' text-anchor='middle' fill='#fff' font-family='Liberation Sans'>T</text></svg><div class='t' style='left:1254.0px;top:1048.0px;font-size:15.3px;font-weight:400;color:#fff;letter-spacing:-0.3px'>Micro...</div><svg class='a' style='left:1320px;top:1040px;' width='28' height='28' viewBox='0 0 28 28'><rect x='3' y='2' width='22' height='17' fill='#1e9fd6'/><path d='M13 3 L25 1 V9 Z' fill='#3cbf5a'/><path d='M6 16 L22 4' stroke='#222' stroke-width='2'/><rect x='1' y='19' width='26' height='7' fill='#e3c25c'/></svg><div class='t' style='left:1354.0px;top:1048.0px;font-size:15.3px;font-weight:400;color:#fff;letter-spacing:-0.3px'>Work ...</div><svg class='a' style='left:1420px;top:1040px;' width='30' height='30' viewBox='0 0 30 30'><path d='M2 5 H12 L14 8 H28 V27 H2 Z' fill='#f2c94c'/><rect x='10' y='2' width='16' height='20' fill='#3cb3e4'/><path d='M14 12 H22 L19 9 M22 12 L19 15' stroke='#2ea043' stroke-width='2.5' fill='none'/></svg><div class='t' style='left:1455.0px;top:1048.0px;font-size:15.3px;font-weight:400;color:#fff;letter-spacing:-0.3px'>Accu...</div><svg class='a' style='left:1528px;top:1046px;' width='18' height='12' viewBox='0 0 18 12'><path d='M1 10 L9 2 L17 10' stroke='#fff' stroke-width='1.5' fill='none'/></svg><svg class='a' style='left:1566px;top:1043px;' width='24' height='22' viewBox='0 0 24 22'><path d='M3 20 A18 18 0 0 1 21 3 M7 20 A13 13 0 0 1 21 7 M11 20 A9 9 0 0 1 21 11' stroke='#ddd' stroke-width='1.3' fill='none'/><circle cx='20' cy='19' r='1.8' fill='#fff'/></svg><svg class='a' style='left:1605px;top:1043px;' width='26' height='22' viewBox='0 0 26 22'><path d='M2 8 H6 L12 3 V19 L6 14 H2 Z' fill='none' stroke='#fff' stroke-width='1.3'/><path d='M15 8 Q17 11 15 14 M18 6 Q21 11 18 16 M21 4 Q25 11 21 18' stroke='#aaa' stroke-width='1.2' fill='none'/></svg><svg class='a' style='left:1645px;top:1042px;' width='28' height='26' viewBox='0 0 28 26'><ellipse cx='12' cy='12' rx='10' ry='6' fill='#bbb'/><circle cx='19' cy='17' r='6' fill='#1e88e5'/><path d='M16 17 A3 3 0 0 1 22 16' stroke='#fff' stroke-width='1.3' fill='none'/></svg><svg class='a' style='left:1683px;top:1045px;' width='28' height='18' viewBox='0 0 28 18'><rect x='7' y='4' width='18' height='11' fill='none' stroke='#fff' stroke-width='1.3'/><rect x='9' y='6' width='14' height='7' fill='#ddd'/><path d='M1 9 H7 M3 5 V9' stroke='#fff' stroke-width='1.3'/></svg><div class='t' style='left:1714.0px;top:1048.3px;width:50px;text-align:center;font-size:15.0px;font-weight:400;color:#fff;'>ENG</div><div class='t' style='left:1762.0px;top:1036.3px;width:90px;text-align:center;font-size:15.0px;font-weight:400;color:#fff;'>17:54</div><div class='t' style='left:1757.0px;top:1059.3px;width:100px;text-align:center;font-size:15.0px;font-weight:400;color:#fff;'>09/02/2021</div><svg class='a' style='left:1868px;top:1044px;' width='24' height='22' viewBox='0 0 24 22'><path d='M1.5 1.5 H21.5 V16.5 H14 L11.5 20 L9 16.5 H1.5 Z' fill='none' stroke='#fff' stroke-width='1.3'/></svg><div class='a' style='left:1913px;top:1030px;width:1px;height:46px;background:#777'></div><div class='a' style='left:1475px;top:643px;width:78px;height:78px;border-radius:50%;background:rgba(220,230,120,0.45)'></div><div class='a' style='left:1535px;top:702px;width:40px;height:40px;border-radius:50%;background:#9e2236;overflow:hidden'><div class='t' style='left:-10px;top:5.2px;width:60px;text-align:center;font-size:30px;font-weight:700;color:#fff'>FT</div></div><div class='a' style='left:1634px;top:526px;width:40px;height:40px;border-radius:50%;background:#f5cfd2'></div><div class='t' style='left:1634.0px;top:539.3px;width:40px;text-align:center;font-size:15px;font-weight:400;color:#6b2a30;'>DZ</div><div class='a' style='left:1583px;top:40px;width:263px;height:491px;background:#f0f0f0;border:1px solid #8a8a8a;border-top-color:#dcdcdc;border-left-color:#dcdcdc;box-shadow:1px 1px 3px rgba(0,0,0,0.3)'></div><div class='a' style='left:1586px;top:43px;width:256px;height:28px;background:#c2cfde'></div><div class='t' style='left:1589.0px;top:51.4px;font-size:13.7px;font-weight:700;color:#000;'>User Input</div><svg class='a' style='left:1826px;top:50px;' width='14' height='14' viewBox='0 0 14 14'><path d='M2 2 L12 12 M12 2 L2 12' stroke='#333' stroke-width='1.6'/></svg><div class='t' style='left:1594.0px;top:83.7px;font-size:13.3px;font-weight:400;color:#000;'>Move Offset</div><svg class='a' style='left:1807px;top:77px;' width='20' height='20' viewBox='0 0 20 20'><circle cx='10' cy='10' r='9' fill='#1e78d2'/><text x='10' y='15.5' font-size='15' font-weight='700' text-anchor='middle' fill='#fff' font-family='Liberation Sans'>?</text></svg><div class='a' style='left:1594px;top:104px;width:240px;height:108px;background:#f0f0f0;border:1px solid #a0a0a0;border-right-color:#e8e8e8;border-bottom-color:#e8e8e8'></div><div class='t' style='left:1600.0px;top:108.9px;font-size:16.7px;font-weight:700;color:#000;'>Enter distance for new</div><div class='t' style='left:1600.0px;top:128.9px;font-size:16.7px;font-weight:700;color:#000;'>position.</div><div class='a' style='background:#fff;border:1px solid #333;left:1592px;top:222px;width:16px;height:16px;'></div><div class='t' style='left:1611.0px;top:223.7px;font-size:13.3px;font-weight:400;color:#000;'>Select Reference Location</div><div class='a' style='background:#fff;border:1px solid #cccccc;left:1592px;top:247px;width:16px;height:16px;'></div><div class='t' style='left:1611.0px;top:248.7px;font-size:13.3px;font-weight:400;color:#6d6d6d;'>Move Multi Line in Reverse</div><div class='a' style='background:#fff;border:1px solid #333;left:1592px;top:272px;width:16px;height:16px;'></div><div class='t' style='left:1611.0px;top:273.7px;font-size:13.3px;font-weight:400;color:#000;'>Perp Notch Position</div><div class='a' style='left:1592px;top:302px;width:244px;height:145px;border:1px solid #dcdcdc'></div><div class='a' style='left:1598px;top:296px;width:66px;height:12px;background:#f0f0f0'></div><div class='t' style='left:1601.0px;top:295.7px;font-size:13.3px;font-weight:400;color:#000;'>Value Input</div><div class='a' style='left:1602px;top:314px;width:224px;height:30px;background:#f0f0f0;border:1px solid #b7b7b7'></div><div class='a' style='left:1642px;top:352px;width:68px;height:29px;background:#f0f0f0;border:1px solid #b7b7b7'></div><div class='a' style='left:1642px;top:383px;width:68px;height:29px;background:#f0f0f0;border:1px solid #b7b7b7'></div><div class='a' style='left:1759px;top:352px;width:68px;height:29px;background:#f0f0f0;border:1px solid #b7b7b7'></div><div class='a' style='left:1759px;top:383px;width:68px;height:29px;background:#f0f0f0;border:1px solid #b7b7b7'></div><div class='a' style='left:1642px;top:412px;width:68px;height:30px;background:#fff;border:1px solid #0078d7'></div><div class='a' style='left:1706px;top:419px;width:1px;height:15px;background:#000'></div><div class='a' style='left:1759px;top:412px;width:68px;height:30px;background:#f0f0f0;border:1px solid #b7b7b7'></div><div class='t' style='left:1602.0px;top:361.7px;font-size:13.3px;font-weight:400;color:#000;'>Beg</div><div class='t' style='left:1602.0px;top:391.7px;font-size:13.3px;font-weight:400;color:#000;'>End</div><div class='t' style='left:1602.0px;top:421.7px;font-size:13.3px;font-weight:400;color:#000;'>Dist</div><div class='t' style='left:1735.5px;top:361.7px;width:20px;text-align:center;font-size:13.3px;font-weight:400;color:#000;'>X</div><div class='t' style='left:1735.0px;top:391.7px;width:20px;text-align:center;font-size:13.3px;font-weight:400;color:#000;'>Y</div><div class='t' style='left:1718.0px;top:421.7px;width:40px;text-align:center;font-size:13.3px;font-weight:400;color:#000;'>Ang</div><div class='a' style='left:1593px;top:457px;width:78px;height:28px;background:#cce4f7;border:1px solid #0078d7'></div><div class='t' style='left:1587.0px;top:464.7px;width:90px;text-align:center;font-size:13.3px;font-weight:400;color:#000;'>Value</div><div class='a' style='left:1675px;top:457px;width:78px;height:28px;background:#cccccc;border:1px solid #bfbfbf'></div><div class='t' style='left:1669.0px;top:464.7px;width:90px;text-align:center;font-size:13.3px;font-weight:400;color:#838383;'>Tracking</div><div class='a' style='left:1757px;top:457px;width:78px;height:28px;background:#e1e1e1;border:1px solid #adadad'></div><div class='t' style='left:1751.0px;top:464.7px;width:90px;text-align:center;font-size:13.3px;font-weight:400;color:#000;'>Calculator</div><div class='a' style='left:1593px;top:491px;width:78px;height:28px;background:#e1e1e1;border:2px solid #0078d7'></div><div class='t' style='left:1587.0px;top:498.7px;width:90px;text-align:center;font-size:13.3px;font-weight:400;color:#000;'>OK</div><div class='a' style='left:1675px;top:491px;width:78px;height:28px;background:#e1e1e1;border:1px solid #adadad'></div><div class='t' style='left:1669.0px;top:498.7px;width:90px;text-align:center;font-size:13.3px;font-weight:400;color:#000;'>Cancel</div><div class='a' style='left:1757px;top:491px;width:78px;height:28px;background:#e1e1e1;border:1px solid #adadad'></div><div class='t' style='left:1751.0px;top:498.7px;width:90px;text-align:center;font-size:13.3px;font-weight:400;color:#000;'>Apply</div><svg class='a' style='left:1611px;top:504px;' width='22' height='30' viewBox='0 0 22 30'><defs><filter id='cs' x='-30%' y='-30%' width='160%' height='160%'><feGaussianBlur stdDeviation='1.2'/></filter></defs><path d='M4 4 L4 26 L9.5 21 L13 28 L16.5 26.5 L13 19.5 L20 19.5 Z' fill='#000' opacity='0.35' filter='url(#cs)'/><path d='M2.5 2 L2.5 23 L8 18 L11.5 25.5 L15 24 L11.5 17 L18.5 17 Z' fill='#111' stroke='#fff' stroke-width='1'/></svg><svg class='a' style='left:1550px;top:810px;' width='350' height='200' viewBox='0 0 350 200'>
<defs>
<filter id='bl' x='-20%' y='-20%' width='140%' height='140%'><feGaussianBlur stdDeviation='3'/></filter>
<filter id='bl2' x='-10%' y='-10%' width='120%' height='120%'><feGaussianBlur stdDeviation='1.6'/></filter>
<linearGradient id='vbg' x1='0' y1='0' x2='0' y2='1'><stop offset='0' stop-color='#1b2426'/><stop offset='0.5' stop-color='#1f2a2c'/><stop offset='1' stop-color='#1a2325'/></linearGradient>
<radialGradient id='face' cx='0.3' cy='0.6' r='0.8'><stop offset='0' stop-color='#f6f0ee'/><stop offset='0.55' stop-color='#e4d8d4'/><stop offset='1' stop-color='#b8a6a2'/></radialGradient>
<linearGradient id='hood' x1='0' y1='0' x2='1' y2='1'><stop offset='0' stop-color='#f1c0c8'/><stop offset='0.5' stop-color='#e8b0ba'/><stop offset='1' stop-color='#dca0ac'/></linearGradient>
</defs>
<rect width='350' height='200' fill='url(#vbg)'/>
<g filter='url(#bl)'>
<rect x='0' y='45' width='28' height='155' fill='#0e181b'/>
<rect x='26' y='58' width='118' height='142' fill='#172329'/>
<rect x='124' y='68' width='22' height='132' fill='#121c1f'/>
<rect x='150' y='55' width='70' height='110' fill='#232f31'/>
<ellipse cx='35' cy='38' rx='14' ry='4' fill='#2a3638'/>
<ellipse cx='185' cy='72' rx='9' ry='8' fill='#2e3a3c'/>
</g>
<g filter='url(#bl2)'>
<rect x='30' y='82' width='32' height='34' fill='#2b5f9e'/>
<rect x='42' y='82' width='3' height='34' fill='#1d3f6a'/>
<rect x='73' y='88' width='24' height='28' fill='#2a5c9a'/>
<rect x='109' y='92' width='14' height='20' fill='#2a5a96'/>
<rect x='28' y='116' width='98' height='40' fill='#1c3448'/>
<rect x='28' y='156' width='98' height='44' fill='#182a36'/>
</g>
<g filter='url(#bl2)'>
<path d='M152 200 L156 150 Q160 105 190 92 L228 83 L237 145 L242 200 Z' fill='url(#hood)'/>
<path d='M262 200 L280 140 Q300 118 330 110 L350 104 V200 Z' fill='url(#hood)'/>
<path d='M232 86 Q250 82 265 95 L302 124 Q292 140 284 146 L237 146 Z' fill='#efe6e3'/>
<path d='M226 86 L236 92 L239 146 L230 147 Z' fill='#141414'/>
<path d='M235 0 H350 V32 Q320 26 298 30 Q272 34 260 46 Q252 62 253 88 L243 82 Q236 40 235 0 Z' fill='#201b1b'/>
<path d='M256 42 Q282 30 350 29 V118 Q335 132 310 134 Q284 128 270 110 Q255 90 256 42 Z' fill='url(#face)'/>
<path d='M322 108 Q342 125 350 145 V185 Q340 150 314 118 Z' fill='#3a2a2a' opacity='0.85'/>
<ellipse cx='265' cy='47' rx='11' ry='17' fill='#d7c0bc'/>
<path d='M282 36 L314 58' stroke='#9ab8d0' stroke-width='3'/>
<ellipse cx='326' cy='73' rx='20' ry='17' fill='none' stroke='#1b2330' stroke-width='4.5'/>
<path d='M300 113 Q310 118 318 116' stroke='#c09090' stroke-width='3' fill='none'/>
</g>
<rect x='76' y='94' width='3' height='3' fill='#fff'/>
</svg><div class='a' style='left:1635px;top:953px;width:135px;height:45px;background:rgba(60,60,60,0.92);border-radius:3px 0 0 3px'></div><div class='a' style='left:1770px;top:953px;width:45px;height:45px;background:#a4262c;border-radius:0 3px 3px 0'></div><svg class='a' style='left:1647px;top:966px;' width='22' height='18' viewBox='0 0 22 18'><rect x='1' y='3' width='13' height='12' rx='1.5' fill='#fff'/><path d='M14 8 L20 4 V14 L14 10 Z' fill='#fff'/></svg><svg class='a' style='left:1694px;top:963px;' width='18' height='24' viewBox='0 0 18 24'><rect x='6' y='1' width='6' height='13' rx='3' fill='#fff'/><path d='M3 10 A6 6 0 0 0 15 10 M9 16 V21 M5 21 H13' stroke='#fff' stroke-width='1.5' fill='none'/></svg><svg class='a' style='left:1737px;top:965px;' width='22' height='20' viewBox='0 0 22 20'><rect x='1.5' y='1.5' width='19' height='13' fill='none' stroke='#fff' stroke-width='1.3'/><path d='M8 10 L14 17 M14 10 L8 17' stroke='#fff' stroke-width='1.8'/></svg><svg class='a' style='left:1781px;top:968px;' width='24' height='14' viewBox='0 0 24 14'><path d='M2 9 Q12 0 22 9 L19 12 L16 9 Q12 7 8 9 L5 12 Z' fill='#fff'/></svg><div class='a' style='left:1576px;top:823px;width:19px;height:19px;border-radius:50%;background:#fff'></div><div class='a' style='left:1579px;top:826px;width:13px;height:13px;border-radius:50%;background:#e8101a'></div><div class='t' style='left:1606.0px;top:825.0px;font-size:16.5px;font-weight:400;color:#fff;letter-spacing:0.45px'>Meeting with b.coo...</div><div class='t' style='left:1779.5px;top:828.2px;width:80px;text-align:center;font-size:12.8px;font-weight:400;color:#fff;'>02:53:15</div><div class='a' style='left:1866px;top:836px;width:13px;height:1.5px;background:#ddd'></div></body></html>
